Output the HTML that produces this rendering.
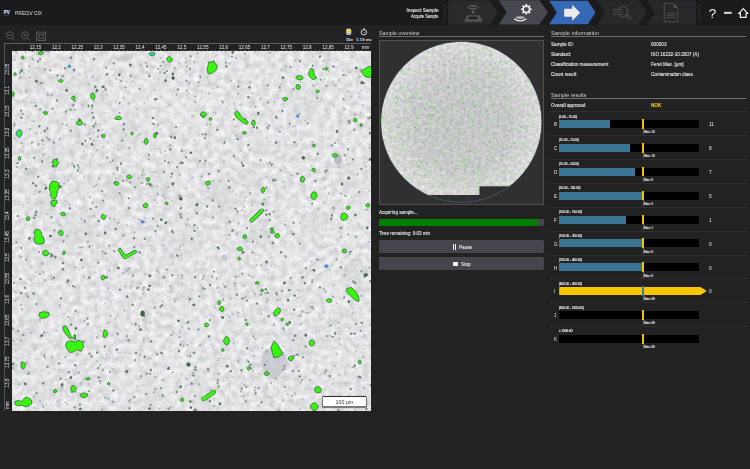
<!DOCTYPE html>
<html><head><meta charset="utf-8"><title>PRECiV CIX</title>
<style>
html,body{margin:0;padding:0}
body{width:750px;height:469px;overflow:hidden;background:#222222;position:relative;font-family:"Liberation Sans",sans-serif;color:#e8e8e8;font-size:5.5px;line-height:7px}
div,span{position:absolute;white-space:nowrap}
#hdr{left:0;top:0;width:750px;height:25px;background:#1b1b1b}
.t{font-size:5.3px;line-height:7px;transform:scaleX(.875);transform-origin:0 50%;-webkit-text-stroke:.1px currentColor;color:#ececec}
.h{font-size:6px;line-height:8px;transform:scaleX(.93);transform-origin:0 50%;color:#d2d2d2}
.ul{height:0;border-top:1px solid #8a8a8a;opacity:.75}
.sep{left:551px;width:195px;height:0;border-top:1px solid #303030}
.rng{left:559.2px;font-size:3.6px;line-height:5px;color:#f4f4f4;-webkit-text-stroke:0.12px #f4f4f4;transform:scaleX(.85);transform-origin:0 50%}
.let{left:553.8px;font-size:5.3px;line-height:7px;color:#e6e6e6;transform:scaleX(.875);transform-origin:0 50%}
.bar{left:559.2px;width:139.8px;height:8px;background:#000}
.bar i{position:absolute;left:0;top:0;height:8px;background:#3b7596;display:block}
.mk{left:642px;width:1.8px;height:9.8px;background:#f5c400}
.cnt{left:709px;font-size:5.6px;line-height:7px;color:#f0f0f0;transform:scaleX(.85);transform-origin:0 50%}
.mxl{left:642.6px;width:0;height:5.5px;border-left:0.6px solid #666}
.mx{left:644px;font-size:3.6px;line-height:5px;color:#f4f4f4;-webkit-text-stroke:0.1px #f4f4f4;transform:scaleX(.85);transform-origin:0 50%}
.btn{left:379px;width:164.5px;height:13px;background:#45464c;border-radius:1px;text-align:center;font-size:5px;line-height:13px;color:#eee}
svg text{font-family:"Liberation Sans",sans-serif}
</style></head><body>
<div id="hdr"></div>
<!-- title -->
<svg style="position:absolute;left:2px;top:8px" width="10" height="9" viewBox="0 0 10 9"><rect x="0.3" y="0.2" width="8.8" height="8" rx="0.8" fill="#141c33"/><text x="4.7" y="5.9" font-size="4.6" font-weight="bold" fill="#f2f2f2" text-anchor="middle">PV</text><path d="M1.8 7.1 Q4.7 7.9 7.6 7.1" stroke="#3b63b0" stroke-width="0.45" fill="none"/></svg>
<div class="t" style="left:15.2px;top:9.5px;font-size:5.5px;color:#c2c2c2">PRECiV CIX</div>
<!-- breadcrumb -->
<div class="t" id="bc1" style="right:311.3px;top:6.9px;font-size:5.3px;transform-origin:100% 50%;color:#ededed">Inspect Sample</div>
<div class="t" id="bc2" style="right:311.3px;top:13px;font-size:4.45px;transform-origin:100% 50%;color:#e6e6e6">Acquire Sample</div>
<svg style="position:absolute;left:440px;top:0;opacity:.999" width="310" height="25" viewBox="440 0 310 25">
<path d="M444.4 4 V21.3" stroke="#363636" stroke-width="0.8"/>
<path d="M448.3 0.3 H489.3 L498 12.4 L489.3 24.6 H448.3 Z" fill="#2a2a2b"/>
<path d="M498.7 0.3 H539.3 L548 12.4 L539.3 24.6 H498.7 L506.7 12.4 Z" fill="#46484f"/>
<path d="M549.2 0.8 H587.8 L595.6 12.4 L587.8 24.2 H549.2 L556.8 12.4 Z" fill="#3568b5"/>
<path d="M597.4 0.3 H638.6 L646.7 12.4 L638.6 24.6 H597.4 L605.3 12.4 Z" fill="#28282a"/>
<path d="M647.4 0.3 H696 V24.6 H647.4 L654.6 12.4 Z" fill="#28282a"/>
<!-- icon1 -->
<ellipse cx="473.1" cy="6" rx="3.9" ry="1" fill="#585858"/>
<path d="M467.4 7 Q473.1 11 478.9 7" stroke="#6a6a6a" stroke-width="0.9" fill="none"/>
<path d="M473.1 9.4 V12.4" stroke="#606060" stroke-width="1.2"/><path d="M470.9 11.7 H475.3 L473.1 14 Z" fill="#606060"/>
<path d="M467.5 15.2 H479.6 L482.9 21.7 H463.9 Z" fill="#555"/>
<ellipse cx="473.2" cy="17.9" rx="5.2" ry="1.7" fill="#252526"/>
<!-- icon2 -->
<g transform="translate(526.3 9.3)" fill="#f1f1f1"><circle r="3.8"/>
<g id="th"><rect x="-0.9" y="-5.3" width="1.8" height="10.6"/><rect x="-5.3" y="-0.9" width="10.6" height="1.8"/></g>
<g transform="rotate(45)"><rect x="-0.9" y="-5.3" width="1.8" height="10.6"/><rect x="-5.3" y="-0.9" width="10.6" height="1.8"/></g>
<circle r="2.4" fill="#46484f"/></g>
<ellipse cx="520.2" cy="17.6" rx="4.4" ry="1.4" fill="#b0b1b4"/>
<path d="M514 18.7 Q520.2 23.1 526.3 18.7" stroke="#f0f0f0" stroke-width="1.3" fill="none"/>
<!-- icon3 arrow -->
<path d="M564.2 8.8 H572.2 V4.8 L580.2 12.7 L572.2 20.7 V16.8 H564.2 Z" fill="#ebebeb"/>
<!-- icon4 -->
<g stroke="#5a5a5a" stroke-width="0.8" fill="none"><circle cx="622.6" cy="11.7" r="5.2"/>
<path d="M626.2 15.8 L628 14.3 L631 18 L629.1 19.5 Z"/>
<path d="M613 9.6 H616.5 M613 12 H616.5 M613 14.4 H616.5 M619.2 9.6 H622.6 M619.2 12 H622.6 M619.2 14.4 H622.6"/></g>
<!-- icon5 -->
<g stroke="#555" stroke-width="0.8" fill="none"><path d="M664.3 3.6 H673.6 L677.8 7.8 V21.7 H664.3 Z"/><path d="M666.5 13.4 H675.6 M666.5 15.4 H675.6 M666.5 17.4 H675.6"/></g>
<path d="M673.6 3.6 L677.8 7.8 H673.6 Z" fill="#555"/>
<path d="M699.6 4 V21.3" stroke="#363636" stroke-width="0.8"/>
<text x="712.5" y="17.7" font-size="13.5" fill="#f2f2f2" text-anchor="middle">?</text>
<rect x="724" y="11.8" width="7.6" height="2.1" fill="#d8d8d8"/>
<path d="M743.3 8.6 L747.6 13.3 H746.1 V17.3 H740.4 V13.3 H738.9 Z" stroke="#f2f2f2" stroke-width="1.2" fill="none" stroke-linejoin="miter"/>
</svg>
<!-- toolbar icons -->
<svg style="position:absolute;left:0;top:25px" width="380" height="20" viewBox="0 25 380 20">
<g stroke="#5c5c5c" stroke-width="0.9" fill="none">
<circle cx="10" cy="35.3" r="3.5"/><path d="M12.6 38 L14.8 40.4 M8.3 35.3 H11.7"/>
<circle cx="25" cy="35.3" r="3.5"/><path d="M27.6 38 L29.8 40.4 M23.3 35.3 H26.7 M25 33.6 V37"/>
<rect x="36.6" y="32.1" width="9" height="8.4"/><rect x="39.2" y="34.5" width="3.9" height="3.7"/>
<path d="M36.6 32.1 L39.2 34.5 M45.6 32.1 L43.1 34.5 M36.6 40.5 L39.2 38.2 M45.6 40.5 L43.1 38.2"/>
</g>
<rect x="346.2" y="28.6" width="5" height="6.5" rx="1.8" fill="#d2d3d6"/><rect x="346.2" y="30.4" width="5" height="1.8" fill="#f2cf12"/><rect x="347" y="33.2" width="3.4" height="0.5" fill="#555b70"/>
<circle cx="363.9" cy="32.3" r="2.7" stroke="#d8d8d8" stroke-width="1" fill="none"/><rect x="363.2" y="28.3" width="1.4" height="1.3" fill="#d8d8d8"/><path d="M363.9 32.3 H365.3" stroke="#d8d8d8" stroke-width="0.8"/>
<text x="349.3" y="40.8" font-size="4.3" font-weight="bold" fill="#e0e0e0" text-anchor="middle">10x</text>
<text x="363.8" y="40.8" font-size="4.3" font-weight="bold" fill="#e0e0e0" text-anchor="middle">1.19 ms</text>
</svg>
<!-- ruler frame -->
<div style="left:4px;top:43px;width:367px;height:368px;background:#222;box-sizing:border-box;border-left:1px solid #4f565c;border-top:1px solid #5a6168"></div>
<svg class="mic" style="position:absolute;left:12px;top:51px" width="359" height="360" viewBox="12 51 359 360"><defs><filter id="bl" x="-20%" y="-20%" width="140%" height="140%"><feGaussianBlur stdDeviation="0.6"/></filter><filter id="bl2" x="-50%" y="-50%" width="200%" height="200%"><feGaussianBlur stdDeviation="3"/></filter><filter id="nz" x="0" y="0" width="100%" height="100%" color-interpolation-filters="sRGB"><feTurbulence type="fractalNoise" baseFrequency="0.16" numOctaves="3" seed="5"/><feColorMatrix type="matrix" values="0.24 0 0 0 0.768  0.24 0 0 0 0.768  0.23 0 0 0 0.782  0 0 0 0 1"/></filter><filter id="bl3" x="-20%" y="-20%" width="140%" height="140%"><feGaussianBlur stdDeviation="0.5"/></filter></defs><rect x="12" y="51" width="359" height="360" fill="#dddddd"/><rect x="12" y="51" width="359" height="360" fill="#dddddd" filter="url(#nz)"/><g filter="url(#bl2)" opacity="0.35"><circle cx="128.3" cy="105.3" r="10.9" fill="#c9cccb"/><circle cx="306.8" cy="84.9" r="10.2" fill="#eceeed"/><circle cx="89.1" cy="81.9" r="8.8" fill="#cfd2d0"/><circle cx="44.6" cy="203.8" r="12.4" fill="#c9cccb"/><circle cx="352.1" cy="278" r="10.2" fill="#c9cccb"/><circle cx="219.2" cy="193.8" r="13.8" fill="#c9cccb"/><circle cx="211.8" cy="98.9" r="8.8" fill="#eceeed"/><circle cx="54.3" cy="162.1" r="12.3" fill="#cfd2d0"/><circle cx="49" cy="256.6" r="6.7" fill="#c9cccb"/><circle cx="208.6" cy="73.6" r="5.5" fill="#cfd2d0"/><circle cx="190.2" cy="242.4" r="12" fill="#d2d4d6"/><circle cx="222.2" cy="214.1" r="7.7" fill="#cfd2d0"/><circle cx="262.9" cy="138.9" r="10.2" fill="#eceeed"/><circle cx="189.7" cy="174.7" r="9" fill="#eceeed"/><circle cx="363.9" cy="93.5" r="8.8" fill="#e9ebe9"/><circle cx="66.6" cy="227" r="5.4" fill="#c9cccb"/><circle cx="286.5" cy="257.3" r="12.9" fill="#e9ebe9"/><circle cx="134.1" cy="177.1" r="9.5" fill="#d2d4d6"/><circle cx="36.7" cy="84.7" r="7.4" fill="#c9cccb"/><circle cx="33.8" cy="303.5" r="10.8" fill="#d2d4d6"/><circle cx="114.2" cy="189.9" r="11" fill="#c9cccb"/><circle cx="349.7" cy="179" r="10.5" fill="#d2d4d6"/><circle cx="33.2" cy="327.6" r="6.2" fill="#cfd2d0"/><circle cx="154.8" cy="381.1" r="9.5" fill="#cfd2d0"/><circle cx="173.3" cy="248.8" r="13" fill="#d2d4d6"/><circle cx="322.2" cy="151.2" r="8.7" fill="#e9ebe9"/><circle cx="257.1" cy="188" r="7.1" fill="#c9cccb"/><circle cx="75.3" cy="134.5" r="7.1" fill="#d2d4d6"/><circle cx="310.4" cy="116.6" r="7.5" fill="#cfd2d0"/><circle cx="162.4" cy="183.9" r="10.1" fill="#cfd2d0"/><circle cx="259.9" cy="236.6" r="10.6" fill="#c9cccb"/><circle cx="175.9" cy="364.6" r="13.6" fill="#eceeed"/><circle cx="152.9" cy="194.6" r="5.9" fill="#d2d4d6"/><circle cx="34.3" cy="75.2" r="6.9" fill="#cfd2d0"/><circle cx="51.5" cy="267.3" r="5.9" fill="#eceeed"/><circle cx="66.3" cy="87.5" r="8.3" fill="#c9cccb"/><circle cx="37.2" cy="125.9" r="8.4" fill="#e9ebe9"/><circle cx="355" cy="267.8" r="9.3" fill="#c9cccb"/><circle cx="316.8" cy="408.5" r="9.2" fill="#d2d4d6"/><circle cx="124" cy="102.9" r="11.7" fill="#e9ebe9"/><circle cx="183.8" cy="300.1" r="9.6" fill="#cfd2d0"/><circle cx="353.4" cy="241.2" r="6.3" fill="#eceeed"/><circle cx="340.2" cy="323.9" r="7.7" fill="#c9cccb"/><circle cx="261.9" cy="145" r="8.3" fill="#cfd2d0"/><circle cx="139.7" cy="131.2" r="9.9" fill="#eceeed"/><circle cx="130.3" cy="131.3" r="12.3" fill="#cfd2d0"/><circle cx="301.4" cy="345.6" r="11.7" fill="#cfd2d0"/><circle cx="83.8" cy="228.4" r="11.6" fill="#c9cccb"/><circle cx="295.7" cy="221" r="6.7" fill="#eceeed"/><circle cx="355.4" cy="212" r="13.4" fill="#e9ebe9"/><circle cx="354.8" cy="182.3" r="7" fill="#cfd2d0"/><circle cx="180.8" cy="172.6" r="9.3" fill="#eceeed"/><circle cx="313.7" cy="223.6" r="10.9" fill="#c9cccb"/><circle cx="311.6" cy="94.2" r="8.5" fill="#cfd2d0"/><circle cx="183.6" cy="115.3" r="12.1" fill="#e9ebe9"/><circle cx="43.1" cy="391.6" r="11.5" fill="#d2d4d6"/><circle cx="156.1" cy="391.8" r="11.5" fill="#cfd2d0"/><circle cx="368.5" cy="60.9" r="10.3" fill="#d2d4d6"/><circle cx="301.5" cy="103.6" r="12.4" fill="#d2d4d6"/><circle cx="248" cy="177.1" r="9.9" fill="#cfd2d0"/><circle cx="19.7" cy="338.8" r="11.5" fill="#c9cccb"/><circle cx="201" cy="387.1" r="8.9" fill="#cfd2d0"/><circle cx="308.6" cy="127" r="7.3" fill="#e9ebe9"/><circle cx="191.9" cy="325.9" r="7.9" fill="#eceeed"/><circle cx="162.4" cy="98.2" r="13.2" fill="#e9ebe9"/><circle cx="334.3" cy="289.5" r="12.3" fill="#eceeed"/><circle cx="163" cy="381.4" r="9.5" fill="#eceeed"/><circle cx="66.5" cy="234.8" r="12.9" fill="#cfd2d0"/><circle cx="230.5" cy="330.4" r="6.3" fill="#cfd2d0"/><circle cx="182" cy="312.1" r="10" fill="#e9ebe9"/></g><g filter="url(#bl)"><path d="M263 352 L272 347 L284 352 L288 362 L283 372 L274 380 L266 374 L261 364 Z" fill="#bfc1ca" opacity="0.7"/><ellipse cx="338" cy="159" rx="4" ry="5" fill="#a4a6b0" opacity="0.7"/><ellipse cx="28" cy="172" rx="5" ry="4" fill="#c0c2c5" opacity="0.6"/><ellipse cx="127" cy="57" rx="6" ry="4" fill="#c0c2c5" opacity="0.6"/></g><g filter="url(#bl)"><path d="M257 242.1l-0 0.4M329.1 71.5l-0.5 -0.7M47.1 213.8l-0.8 0.6M34.7 168.2l0.8 0.2M83.6 150.8l0 0.5M194.3 140.2l0 0.6M345.1 383.2l0.6 -0.5M172.7 201l-0.2 -0.3M252.9 205.2l-0.5 -0.3M55.9 330.7l0.7 0.2M143.5 142.1l-0.6 -0.1M280.1 84.9l0.6 -0.5M251.8 131.5l0.3 0.8M157 202.7l-0.2 -0.7M143.4 172.7l-0.1 0.3M150 237.3l-0.3 0.7M52.5 381.7l-0.4 0.6M42.2 148.9l0.6 -0.5M283.3 346.1l0.6 0.3M351.6 197.1l0.1 0M189.6 168.7l-0.4 0.5M77.8 373.3l-0.4 -0.8M43.8 144.8l0.2 -0.4M106.9 94.8l-0.8 0.8M162 380.6l0.2 -0.7M266.7 388.7l0.8 -0.4M77 386.6l0.2 0M85.9 211.4l0.3 -0.4M300.5 409l-0.7 -0.8M193.5 403.1l0 -0.4M172.5 288l0.2 0.3M208 370.9l0.8 -0.3M89.3 133.6l-0.5 0.6M273.7 101.3l0.8 0.8M312.5 56.1l0.2 0.6M166.6 70.9l0.3 -0.2M193.6 400.5l0.2 0.3M28.2 117.7l-0.4 -0.8M142.7 169.4l0.8 -0.3M24.4 368.7l-0.5 -0.5M132.4 81.2l-0.4 0.2M101.1 330.4l-0.7 0.5M63.6 262.2l-0.2 -0.3M238.1 81.4l0.7 0.6M67.7 372.4l0.5 0.2M286.4 310.4l-0 -0.3M234.1 103.1l0.5 0.3M196.2 205.5l0.3 0M338.6 322l0.1 0.5M17.8 298.1l0.5 0.3M355.2 282.4l-0.7 -0.7M240.7 396.4l-0.2 -0.1M30.2 57.8l0.1 -0.4M106.7 215.5l-0.7 0.7M334.3 84.1l0 0.4M182.1 342.3l0.6 -0.4M283.6 134.1l0.2 -0.1M315.5 78.6l0.7 -0.3M28.8 278.8l-0.5 0.2M131.1 285.6l0.3 0.2M59.9 224.7l-0 0.8M47.7 129.4l-0 0.3M114.5 218.7l0.4 0.8M209.1 163.2l-0.7 -0M116 78.5l0 0.8M368.8 190.3l0.7 0.7M38.8 83.5l0.4 -0.4M141.1 268.2l0.2 -0.4M52.5 182.5l-0 0.6M153.5 108.3l0.7 0.3M157.5 312.8l-0.1 -0.2M55.4 170.3l-0.3 -0.3M155 389.4l-0.5 -0.8M277.6 142.2l-0.7 -0.2M324.3 78.5l0.7 0.4M318.7 152l-0.7 0.3M240 104.6l0.8 -0.1M125.3 329.3l0.5 -0.1M22.4 325.2l-0.2 0.6M210.9 124.2l-0.7 0.7M159.5 272.4l-0.6 0.6M186.3 379.3l0.1 -0.5M160.9 152.4l-0.4 0.4M246.4 197.2l-0.4 -0M252.1 94.1l0.2 -0.7M191.7 343.3l0.1 -0.1M131.5 324.3l-0.1 0.1M99.6 113.9l0.1 -0.3M144.2 342.4l-0.5 -0.8M324.6 188.8l0.4 -0.5M109 321.8l-0 0.1M141.3 298.2l0 0.5M316.7 84.3l0.6 -0.2M243.8 206.5l-0.3 0.5M359.5 96.8l-0.1 0.4M300.7 399.6l-0 -0.7M346 385.1l0 -0.1M173.2 332.9l-0.4 -0.6M360.9 90.2l0.5 0.3M315.9 373.2l-0.7 0.4M12.5 96.2l0.1 -0.7M268.7 397.5l0.2 0M169 326l-0.6 -0.3M350.7 120l-0.4 0.5M12.4 244.5l0.8 -0.4M125.6 353.2l-0.4 0M208.4 61.5l-0.1 0.2M31.9 120.9l0.6 0.2M41.1 133l-0.1 -0.2M189 301.5l0.3 -0.2M154.3 53.4l-0.3 0.6M36.2 229.5l-0.5 0.4M81.6 218.4l-0.4 0.6M51.1 275.5l0.2 0.6M186.1 378.7l-0.7 0.2M343 70.6l-0.8 0.2M161.1 306.5l-0.5 -0.1M267.6 164.1l-0.6 -0.7M71.5 119.6l0.2 0M179.9 163.3l0.4 0.5M365.6 210.3l-0.6 -0.7M41 202.3l0.6 0.1M284.4 187.8l0.4 -0.3M300.6 82.6l0.3 -0.5M206.4 211.7l-0.3 0.4M182.4 278.4l-0.4 0.2M157.3 186.2l-0.1 0.5M34.3 121.2l-0.7 0.2M142.3 171.6l0.7 -0.7M280 299.2l0.7 -0.3M271 265.4l0.5 0.7M35.5 348.4l-0.6 0.3M179.2 330.5l0.5 0.7M304.5 98.8l-0 -0.8M346.2 160.2l0.3 -0.6M96.8 361l-0.1 0.5M225.9 235.3l-0.2 -0.5M158.4 284.8l-0 0.1M69.7 204.6l-0.6 -0.7M236.2 126l-0.1 0.8M361 113.3l-0.6 -0.1M332 135.6l0.1 0.4M284.7 331.7l-0.3 -0.4M108.1 142.5l-0.4 -0.1M78.7 135.8l-0.3 0.7M79.6 74.3l-0.4 -0.4M200.9 284.9l-0.6 -0.1M25.3 52.6l0.6 -0.4M172.9 185.6l0.6 -0.4M30.1 267.2l0.5 -0.5M39 235.6l-0.5 0.2M290.2 290.3l-0.8 0.2M266.8 176.9l-0.7 -0.3M27.9 411l-0.7 0.4M340.1 344.3l0.5 -0.1M145.5 274.6l-0.7 -0.7M189.9 225.1l-0.1 0.5M250.4 106.6l0.1 0.2M154.8 148.6l0.8 0.3M162 69.5l0.4 0.6M160.7 57.6l0.4 0.5M243.4 191.7l-0.2 0.7M167.9 107.4l-0.6 -0.7M219.4 182.3l0.4 -0.6M30.6 102.3l0.5 -0.2M217.7 384.8l0.4 -0.5M136.9 109.3l-0.5 -0.7M149.8 322.3l0.5 0.5M120.3 352.4l-0.7 0.7M124.9 269.8l0.2 -0.7M267.7 298.8l0.6 0.2M319.5 274.6l0.2 -0.5M181.8 254.6l-0.7 0.7M68.2 180.3l-0.6 0.8M304.8 120.3l0.6 0.5M253.3 291.4l-0.3 -0.2M175.6 356.6l0.4 0.2M122.6 140.7l-0.2 -0.2M192.8 115.4l-0.8 0.8M179 211.9l0.2 0.5M312.3 342.8l-0.2 -0.7M140.7 182.5l0.5 0M247.9 65.6l-0.6 0.7M124.6 310.3l-0.7 0.4M333.3 286l0.5 -0.8M35.8 272.1l0.3 -0.6M59.3 369.9l-0.3 0.5M297.4 298l0.4 -0.4M311.1 270.8l-0.4 -0.3M232.3 376.8l-0.1 -0.4M358.2 223.8l0.1 0.2M97.2 185l-0.5 -0.2M240.5 151.2l-0.3 -0.2M296.4 146.2l0.4 -0.7M320.1 398.8l-0.1 0M259.3 373.6l-0.4 0.1M319.5 316.7l-0.2 -0.2M144.5 103.6l-0.3 -0.7M94.6 272.5l0.7 -0.3M197.3 162.6l0.7 0.6M345.3 373.5l0.4 0.4M91.6 155.7l0.2 -0.1M142.7 68.2l-0 0.2M28.4 70.6l0.1 -0.3M199.8 243.3l-0.1 -0.3M60 182.8l0.5 -0.5M17.1 339.5l0.3 -0.1M34.9 103.1l0.3 -0.4M303.4 399.2l-0.7 0.5M332.5 265.1l0.1 0.2M197.8 228.4l-0.5 -0.8M34.1 60.1l-0.5 -0.5M339.3 88.8l0.2 0.3M82.8 199.7l0 0.2M244.5 200.5l0.2 0M34.9 276.3l0.8 0.4M183.6 244.8l-0.2 -0.1M339.5 80l0.2 -0.5M369.8 145.1l0.2 -0.6M332 384.1l0.7 -0.4M30.9 279.9l0.3 0.3M341.3 400.9l-0.3 0.7M333 81.8l0 -0.5M336.8 354l-0.5 -0.5M340.5 120.1l-0.2 0.2M148.2 357.7l0.7 0.8M314.1 244.1l-0 0M14.3 60.5l0.7 -0.4M329.6 335.1l-0.2 0.1M214.9 112.8l-0.7 -0.6M235.3 109.3l0.8 0.3M23.1 100.8l0.2 -0.7M36.4 67.8l0.6 0.4M83.6 394.6l0.1 0.3M327.8 323.1l0.3 -0.2M100.5 124.1l-0.7 0.7M339.1 322.4l-0.7 0.4M239 222.8l-0.6 0.5M244 157l-0.3 -0.4M138 385.8l-0.7 0.4M338.8 327.9l0.2 -0M115.3 319.4l0.5 -0.8M198.2 86.4l-0 -0.7M215.2 308.2l0.5 0.1M115.1 208l0 -0.3M281.4 70.4l-0.2 -0.6M261.6 348.1l0.7 0.1M355.6 236.5l0.1 -0.5M304.7 388.8l-0.4 -0.5M349 327.1l-0 0.8M213.5 88.6l-0.3 -0.6M345.3 372.1l0.4 -0.1M243.9 184.9l-0.3 -0.1M207.6 112.6l0.8 0.2M350.9 96.7l0.2 0.3M229.3 63.2l0.1 0M323.6 213.1l0.1 -0.3M178.3 299.1l-0.4 -0.4M131.9 282.4l0.3 0M108 322.7l0.5 0.2M271.7 401.9l0.4 0.2M137.2 136l0.7 -0.4M354.8 409.2l-0.5 0.3M82.2 105.3l-0.6 -0.3M118.8 149.6l-0.6 0.7M112.8 369.7l-0.1 -0.8M318.7 208.2l-0.4 0.8M118.3 59l-0.4 0.4M14 138.2l0.6 0.3M222.9 284l0.6 0.3M246.2 366.9l0.2 0.1M94.1 116.3l-0.6 -0.1M105.3 303.2l0.6 -0.4M155.6 307.5l-0.5 0.6M185.3 58.1l0.6 0M249.3 365.3l0.6 -0.3M15.8 350.5l0.7 -0.6M102.2 129.4l0.3 0.7M83.7 176.4l0.6 -0.1M85.6 222.3l-0.8 0.5M144.8 174.4l0.4 -0.1M367.5 117.2l0 0.7M273.7 272l0.2 -0.4M149.1 73.1l-0.7 0.7M237.7 294l0.1 -0.6M121 195.2l0.7 0.8M368.9 396.9l-0.1 -0.5M345.7 75.8l0.5 -0.5M242.5 310.5l0.5 -0.6M251.1 350.1l0.5 -0.1M369.6 324.6l0.2 0.4M180.5 333.1l-0.4 0.3M258.8 404.8l0.3 -0M301.2 338.6l-0.2 0.2M127 225.6l0.2 -0.7M334 106l-0.3 -0.2M42.6 254.3l-0.3 0.7M202.5 175.3l0.1 0.3M87.3 76.9l-0.3 0.2M219.7 358.5l-0.5 -0.1M293.8 126.1l-0.2 0.1M230.8 298.7l0.8 -0.7M335.7 248.5l0.2 -0.3M189.5 127.7l-0.7 0.5M253 93.1l-0.6 -0.1M308.9 221.4l0.1 -0M337.1 303.2l-0.4 -0.5M227.3 315.5l-0.5 -0.3M261.8 230.1l-0.3 -0.1M164.9 411l0.3 -0.5M141.4 283.7l-0.8 -0.7M276.4 410.6l0.5 -0.6M185.8 323.6l-0.6 -0.5M161.2 96.7l-0.6 0.3M134.5 331.3l0.1 0.7M114 174.1l-0.4 -0.7M115.8 178.9l-0 -0.3M365.4 365.3l-0.2 -0.5M188.7 93.5l-0.5 0.3M57.8 401.2l-0.7 0.8M155.2 250.5l-0.2 0.1M155.1 90.1l-0.7 0.5M182.5 326.8l-0.7 0M207.2 186.4l-0.6 0.3M259.4 366.5l-0.7 -0.7M239.5 276.1l-0.5 0.3M324 202.8l-0.6 0.7M16.8 364.9l-0.6 -0.3M266.9 361.5l-0.5 -0.7M19.3 254.9l0.1 0.7M190.7 239l0.5 0.4M163.2 301.5l-0.2 -0.7M256.1 264.8l0.8 0.3M67.8 328.2l0.1 -0.7M181.5 373.5l0.2 -0.1M15.3 292l0.8 0.6M90.4 94.7l-0 -0.4M216.3 213.3l0.4 0.7M143.3 320l0.3 -0.6M284.6 156.5l0.1 -0M252.4 371.4l0.7 -0.7M23.5 72.8l0.6 0.3M233.9 191l-0.3 0.2M355.8 351.6l0.2 -0.3M352.6 313l-0 -0.5M358.9 93l0.7 -0.5M299.9 222.7l0.4 -0.1M109.6 322.7l-0.3 -0.4M235.2 285.3l0.5 0.2M324.2 312.3l-0.8 -0.6M310.9 261.5l0.8 -0.4M151.1 186.4l0.4 -0.4M174 298.9l-0.3 -0.4M68.5 382.4l0.4 0.5M115.6 101.6l0.6 0.8M64.8 402.1l0.5 0.1M291 231l0.1 0.1M186 188.4l0.5 0.4M364.6 162.4l-0.7 -0.2M266.3 384.4l0.1 -0.8M150.2 245.6l0.1 -0.2M34.5 194.3l0 -0.4M311.2 166.6l0 -0.5M88.4 84.2l0.5 -0.3M219.5 180.2l0.4 0.6M100.4 383.1l-0 0.6M145.4 217.8l-0.7 -0.3M22.9 152l0.2 -0.6M85.5 364.5l0.1 0.1M88.7 384.2l-0.4 -0.6M172.4 264.5l0.2 -0.6M314.9 173l0.8 -0.2M21.9 63.5l-0.2 0.3M186.8 355.4l0.6 0.6M241.7 383l0.3 -0.7M126.4 135l-0.7 0.7M193.8 116.8l0.6 -0.2M96.4 310.5l-0.5 0.7M349.9 72.3l0.1 -0.8M342 143.8l0 0.4" stroke="#a9b8aa" stroke-width="1.8" stroke-linecap="round" fill="none" opacity="0.7"/><path d="M285.4 225l-0.6 -0.3M14.1 122.6l0.4 0.1M170.4 285.9l-0 -0.2M152 186l-0.2 -0.1M301.9 380.1l0.6 -0.1M339.6 338.6l-0.5 0.5M39.9 273.7l-0.2 0.4M291.4 395.9l0.7 -0.2M19.8 78.1l0.8 -0.3M96 92.6l-0.2 -0.3M276.2 115.9l-0.1 0.6M169.6 104.8l-0.1 -0.4M21.1 256.6l-0.3 0.5M105.6 90.3l-0.1 -0M67.1 235.8l0.2 0.5M344.2 252.6l0.5 -0.6M283 400.5l-0.1 -0.4M97.7 136.7l-0.2 -0.1M70.2 350.6l0.8 -0.6M241.7 210.2l0 0M171 335.2l0.7 -0.3M141.3 65.6l-0.1 -0.4M76.9 354.6l0 -0.4M75.1 267.2l0.5 0.6M274.4 325.1l-0.5 -0.6M252.5 277.2l-0.5 -0.3M15.6 300.2l0 0.5M340.9 237.6l-0.2 -0.3M241.5 391.4l-0.7 -0.1M285.9 99l0.3 -0.4M214.2 405.9l-0.7 0.3M218.4 359.9l-0.2 0.7M359.8 76.7l-0.2 -0.4M310 379.5l0.4 0.6M218.9 374.3l-0.3 -0.6M274.4 211.7l-0.8 0.5M60.2 138.7l-0.7 0.2M72.3 163.3l0.1 0.7M19 384.5l0.4 -0.4M312.6 280.3l-0.1 -0.4M171.5 177.3l-0.6 -0.5M110 218.3l0.1 0.4M51.5 94.8l0.6 0.1M93.6 132.7l0.3 -0.1M154.4 392.3l-0.8 0.2M261.1 265.9l0.2 -0.7M360.4 69.7l-0.2 -0.2M313 308.6l0.5 0.1M365.9 166.4l-0.2 0.1M128.6 103.8l0.3 -0.2M324.5 289.7l-0.8 -0.6M79.3 167.8l-0.5 0.3M92.9 202.5l-0.2 0.8M174.9 67.8l0.8 0.8M26.5 362.6l0.2 0.7M235.8 277.2l0.5 -0.7M48.1 94.8l-0.8 -0.4M26.2 91.7l-0.2 -0.5M33.7 396.3l0.7 0.6M42.3 263.5l0.7 -0.1M195.7 369.7l0.7 0.1M110.4 315.9l0.4 -0.3M175 301.1l-0.4 -0.2M208.9 183.1l0.6 -0.3M183.6 345.8l-0.8 -0.3M79.8 247.5l0.8 -0.2M343.8 109.4l0.7 -0.3M128.8 148.2l0.6 -0.5M32.4 58.8l0.1 0.2M136.9 287.8l0 0.5M139.1 325.6l0 0.8M255.3 387.2l-0.1 0.3M62.4 123.9l0.2 -0.4M313.2 85.2l0.6 0.7M369.4 147.7l0.2 0.2M264.6 199.7l-0.6 -0.1M209.4 93.3l-0.2 0.8M65.7 357l-0.4 0.2M51.9 357.6l0.3 -0.3M138.6 178.1l0 0.2M244.7 53.4l0.4 0.8M148.7 159l0.1 0.5M168.4 186.7l-0.4 0.5M130.5 399.8l0.2 -0.4M129 401l0.6 0.7M21.2 143.4l0.6 -0.3M204.6 163.5l0.2 -0.1M308.4 312.8l-0.1 -0.1M26.6 294.4l-0.1 -0.8M36.5 133.5l-0.1 0M244.8 385.2l-0.6 -0.5M163.2 195.6l0.4 0.6M222.9 300l0.4 -0.7M142.2 183l-0.7 -0.3M75 287.1l-0.3 -0.3M347.8 234.2l0.8 0.2M200.1 344.8l-0.5 0.6M160 72.7l0.1 -0.6M216.6 278.3l0.4 0.3M15.9 52l0.3 0.1M341.2 194.1l-0.6 -0.8M22.6 114.1l0.4 0.1M324.7 373.4l0 -0.6M83.3 267.6l-0.6 0M194.9 61.5l-0.7 0.7M188.1 219.3l-0.1 0.5M245.4 297.4l0.1 -0.6M97.5 150.2l-0.7 0.2M320.5 392.2l-0.7 -0.5M236 58l-0.4 -0.2M286.3 66.8l-0.7 -0.4M92 108.4l0.1 -0.5M14.2 363.1l-0.1 -0.1M102.5 370.3l0.8 -0.7M255.1 294l0.1 -0.1M155.1 307.2l-0.8 0.6M43.4 112.2l-0.2 -0.8M328.7 193.6l-0.2 -0.3M324.9 171.9l0.2 0.7M163.6 379.7l0.1 -0.2M179.7 175l-0.1 -0.4M21.1 340.8l-0.4 -0.6M82.5 247.2l0.5 0.1M179.7 337.2l-0.4 -0.2M89.7 196.9l0.2 0.1M118.7 222.3l-0.5 0.6M254.4 390.2l0.8 0.2M170.1 407.4l0.1 -0.2M195.2 96.2l0.4 0.3M44.8 357.7l0.4 0.4M22.3 309.6l-0.6 -0.8M267.1 301.1l0.4 -0.4M79.6 371.9l-0.7 0.7M301.1 324l-0.5 0.3M43.6 154.9l0.5 -0.2M139.8 355l-0.1 0.2M237.7 361.7l0.7 -0.5M143.6 338.8l0.3 0.6M21.1 304.4l-0.1 0.8M155.8 377.2l-0.6 -0.3M109.2 270.2l-0.4 0.3M157.3 270.1l-0.1 0.4M68.1 316.8l0.1 0.2M350 254.2l-0.4 -0M199 384.2l0.3 0.1M347.9 91.3l0.4 0.2M335.5 366l0.1 0.3M361.7 296.2l-0.7 -0.3M291 175.4l0.7 -0.1M279.1 410.3l0.2 -0.4M201.3 176.7l0.7 -0.1M134.2 232.1l0.3 0.5M236.7 234.1l0.3 -0.5M253.7 355.8l0.4 -0M80 393.8l0.5 0.1M74.7 109.9l0.4 -0.4M105.4 397.9l-0.5 -0.2M45.2 280.1l-0.6 0.3M186.6 224.8l0.3 -0.8M260.3 98.9l0.2 0.3M59.9 305.8l0.1 -0.4M238 93.5l-0.1 0.7M255.1 106.7l0.8 0.5M157.8 125.3l0.3 -0.8M186.7 66.6l0.6 -0.3M51.7 162.2l0.7 -0.5M171.8 255.9l-0.3 0.1M28.4 219.7l0.8 -0M280.3 170.4l0.4 -0.4M243.6 395.4l-0 0.5M127.5 180.3l-0.7 -0.3M232.2 314l0.3 0.2M40.1 320.1l-0.8 -0.2M64.1 183.4l0.7 0M333.5 296.5l-0.6 0.4M123.4 273l-0.2 0.2M139.9 133.9l-0.6 0.7M312.8 142.3l-0.7 -0.6M300.2 382.6l0.8 -0.2M30.1 128.9l-0.1 0.4M369.4 267.9l0.2 -0.6M93.7 100.8l0.2 -0.2M363.5 357.2l-0 -0.5M145.7 62.5l0.2 0.5M195.6 102.5l-0.7 -0.7M267.2 371.6l-0.7 -0.8M355.2 114.5l0.4 -0.2M13.5 340.5l0.3 0.1M180.3 246.4l0 -0.1M204 276.3l-0.6 -0.2M230.7 80.3l0.5 0.4M131 288l0.1 -0.1M144.3 287.3l-0.6 0.6M202.4 279.1l0.6 -0.4M277.6 299.9l-0.6 0.1M211.2 390.5l-0.2 -0.4M170.5 145l-0.4 0.7M84.8 320.9l-0.4 0.5M245.2 118.5l0.3 0.3M93.5 215.9l0.1 0.3M276.1 378.3l0.1 0.6M255.9 339.1l-0.6 0M194.1 352.9l0.7 0.2M356.8 236.5l-0.1 0.3M207.4 399.5l-0.5 -0M45.4 185.4l0.2 -0.2M29 66l0.3 0.7M177 94.4l-0.6 0.7M43.5 406.9l-0.5 -0.6M273.4 178.7l-0.2 0.5M300.7 316l-0.8 -0.4M97.9 235.7l0 -0.2M187.5 345l-0.2 -0.2M129.5 268.1l-0.7 0.7M99 178.6l0.3 -0.8M367 209.4l0.5 -0M38.5 144l-0.6 0.7M325.7 292l0.5 0.1M101.8 410l0.4 -0.4M171.4 59.9l0.8 -0M185.7 62.4l0.5 -0.7M234.7 283.1l0.2 0.5M359.3 300.5l-0.1 -0.4M355.9 237.1l-0.2 0M123.7 98.1l0.2 -0.5M306.1 312.8l-0.3 -0.1M348.5 164.2l-0.3 -0M93.4 140.5l0.6 0.2M238.5 312.7l-0.6 -0.2M34.8 407.9l-0.2 0.1M221.8 101.1l0.3 0.7M336 85.3l-0.5 -0.1M217.3 86.6l0.5 0.5M97.5 337.8l-0.6 -0.7M357.7 173.9l-0.2 0.6M100 365.2l0.3 -0.3M264.8 292.8l0.6 0.5M192.8 372.9l0.5 0.8M66.1 124.9l0.6 0.3M157.4 193.6l0.4 0.7M222.7 102.8l0.4 -0.4M217.3 288.2l0.7 -0.7M80.3 383.9l0.1 -0.3M138.9 219.4l0.8 0.3M270.9 382.9l0.5 -0.3M74.9 374.2l0.1 0.4M236.9 136.3l-0.8 -0.7M172.8 372.4l-0.3 0M47.7 138l-0.7 -0.6M29.4 77.4l0.5 0.1M270.1 52.8l-0.4 0.2M17.4 167.2l-0.8 -0.3M323.5 60.8l-0 0.2M299.3 113.8l0.6 0.5M43.3 271.6l0.4 0.8M155.4 389.5l0.6 -0.8M125.8 286.5l-0.3 -0.1M266.9 351.6l-0.5 -0.8M87.6 241.6l0.5 -0.2M141.9 174.9l0.3 0.6" stroke="#8fa391" stroke-width="2.0" stroke-linecap="round" fill="none" opacity="0.75"/><path d="M67.1 404.3l0.1 -0.4M234.1 343.8l-0 -0.7M244.4 285.6l0.1 0.3M212.8 181.1l0 -0.4M102.8 251.9l-0.6 0.5M362.7 105.2l0.2 -0.2M363.5 388.3l0.2 -0.6M207 124.8l0.4 -0.4M229.6 316.5l0.6 0.6M319.2 331.5l0 -0.2M266.8 210l0.6 -0.5M339.5 375.4l-0.2 -0.5M295.5 60.5l0.3 -0.8M301.6 379.9l0.3 -0.2M93.9 186.4l0.7 -0.2M247.9 360.7l-0.8 -0.8M266.6 138.1l-0.2 -0.3M164.8 151.3l0.6 -0M364.3 335.7l-0 0.7M288.1 394.5l-0.6 -0.3M43.7 52.4l0.6 -0.4M126.8 270.7l0.7 -0.5M30.7 332.6l0.6 0.4M28.6 329.6l-0.1 -0.1M62.2 388l0.3 0.5M66.5 379.6l-0.6 -0.3M192.4 177.6l0.4 -0.1M154.6 200.1l0.2 0.3M154.4 171.8l0.6 0.1M84.3 276.8l-0.8 -0.6M225.7 257.9l0.3 0.4M29.3 372.8l-0.7 -0.6M355.6 400.4l0 -0.8M92.4 245.6l0.2 0.1M368.6 241.8l0.5 0.7M39.8 400.4l0.6 0.8M92.4 77.1l0.3 -0.8M108.6 398.9l-0.5 -0.7M295.4 393.7l-0.4 -0.3M26.9 214.3l-0.3 -0.3M159.3 408.6l0.4 -0.4M163.5 245.4l-0.2 -0.6M285.2 368.4l0.5 0.6M240 137.1l0 0.8M261 313.8l0.8 0.5M250.2 82.3l0.2 -0.7M269.2 197.1l0.1 0.3M170.8 291.5l-0.1 0.1M182 284l-0 -0.3M208.1 187.8l0.5 0.5M324.1 178.9l-0.7 0.8M107.6 288.5l0.5 -0.7M298.2 290.1l0.7 0.4M106.2 353.8l0.6 -0.2M223.6 256.5l0.8 -0.7M283.9 182.1l-0.5 -0.5M143.3 293.5l-0.6 0.3M75.8 392l0.6 0.2M338.9 166.9l-0.2 0.6M165.7 198.6l0.3 -0.2M143 289.7l0 -0.3M249.7 150l-0.3 -0.1M52.1 279.5l0.4 -0.5M197.7 53.1l-0.6 -0M249 275.2l0 0.5M102.8 251.2l-0.8 -0.4M224 161.4l0.1 0.7M103.8 146.5l-0.1 0M189.1 83l-0.6 0.7M116.3 332.2l0.7 0.3" stroke="#9aa6c8" stroke-width="1.8" stroke-linecap="round" fill="none" opacity="0.8"/><path d="M146.9 66l0.4 0.8M166.7 269.7l-0.4 -0.4M317 97.6l0.2 0.8M317.8 259.9l-0.7 -0.5M320.8 79.8l-0.1 -0.2M160.9 387.9l0.2 0.5M50.7 253.9l0.7 0.3M168.6 409.2l-0.5 -0.7M154.7 99.7l0.4 -0.8M95.4 123.1l0.1 0.7M117.5 169.9l-0.2 -0.1M44.3 356.2l0.1 -0.8M190.4 356.3l-0.5 -0.1M307.8 122.9l-0.3 0.6M209.6 320.3l0.5 -0.6M158.1 69l0.2 -0.3M80.3 404.6l-0.5 0.1M198.7 82.2l-0.2 0.3M119.3 193.1l0.6 0.3M122.2 140.5l-0.2 -0.1M205.7 160.8l-0.6 -0.5M246.2 386.7l0.3 0.3M62.7 386l-0.3 -0.1M265.8 290l0.4 -0.8M36.3 393.5l0.5 -0.7M90.9 209.1l-0.5 -0.5M361.4 270.9l-0.2 0.4M85.2 124.2l-0.5 0.6M56.7 100.3l0.6 0.5M190.5 56.1l0.4 0.4M70.9 130.5l0.4 0.4M299.9 243.4l-0.5 0.4M268.8 236.8l-0.1 -0.5M44.9 69.1l-0.4 0.5M265.5 210.3l-0.1 0.6M343.7 99l-0.5 -0.1M284.2 365.9l0.5 0.3M270.2 162.4l-0.4 0.1M89 391.4l0.3 -0.4M361.7 168.9l-0.6 -0.3M247.1 300.9l-0.5 -0.6M78 170.9l-0.2 -0.7M138.3 287.7l-0.5 0.2M200.2 77.3l-0 -0.8M292.5 371.2l0.7 -0.5M112.5 160.1l0.1 0.4M84.3 220.4l0.4 0.4M336.6 259.4l-0.3 0.1M48.1 51.5l-0.5 -0.6M119.7 112.9l-0.2 -0M130.3 182.1l-0.6 0.5M302.4 311.5l-0.1 0.4M52.6 109.1l-0.2 -0.7M26.2 259.5l-0.1 0.3M161.1 352.4l-0.7 0.4M275.6 180.4l0.3 -0.7M13.8 283.1l0.5 -0.3M105.8 89.4l-0.4 -0.6M109.1 245.8l-0.3 -0.4M216 66.1l-0.4 0.7M113.8 250.9l0.8 0.7M272.8 243.5l-0.4 -0.6M50 70.3l0.5 0.3M87.7 318.7l-0.7 -0.5M313.9 410.3l-0.1 0.2M51.4 256.1l-0.6 0.3M90.1 138.7l0.4 0M306.1 346.7l-0.7 -0.3M47.2 128.4l0.4 -0.5M121 81.2l0.4 0.1M77.6 165.3l0.7 0.5M23.6 334.9l-0.6 0M72 338.2l0.4 -0.5M344 298l0.3 -0.7M13 368.1l-0.7 0M130.5 75.9l0.2 -0.7M323.1 69.1l-0.2 -0.1M245.7 400.7l0.1 0.5M188.8 328.9l-0 -0.4M261 160.1l-0.7 -0.1M295.1 295.8l-0.5 -0.2M241.7 388.5l0 0.4M225.1 286.9l0.2 -0.7M293.2 339.8l0.4 0.6M98.2 262.5l0.1 0.6M218.4 387l0.6 -0.7M250.2 193.1l0.2 0.4M135 187.4l0.7 -0.4M253.2 336l0.3 0.6M165.1 160.7l-0.3 0.2M353.4 367.2l-0 -0.1M119.5 103.5l0.1 -0.7M153.4 218.7l-0.7 -0.3M368.3 118.4l0.6 -0.1M205.2 138l-0.5 0.2M146.9 373.7l-0.2 -0.3M66.2 111.3l-0.2 0.5M328.6 396.8l-0.3 -0.3M326.6 335.7l0.2 0.6M359.6 191.7l-0.8 0.6M49.2 139.5l0.1 0.3M276.4 294.4l0.8 0.4M282.4 290.8l-0.6 0.4M102.9 200.8l0 -0.3M107.6 157.5l-0.3 0.3M258.4 388.6l0.5 -0.7M247 228.6l0.3 -0.8M326.2 370.7l-0.6 -0.2M123.7 235.5l-0.6 0.2M176.7 392.4l-0 -0.8M348.2 148.7l-0.5 0.7M194.4 410.2l-0.5 0.1M364.6 276.8l-0.4 0.4M21.3 248.4l-0.1 -0.7M353.1 281.2l-0 0.8M141.3 376l-0.3 0.5M190 68.4l0.1 0.6M84.1 341.7l-0.7 -0.3M198.9 296.3l0.7 0.1M360.8 330.7l-0.2 0.3M109.8 371.8l-0 0.2M345.2 196.1l0.3 -0.2M126.7 336.6l-0 -0.6M344.4 275.2l0 -0.1M69.4 372.3l-0.7 -0.4M204.3 289.1l0.6 -0.1M39.5 192l0.3 -0.2M303.1 357.5l-0.6 -0.1M16.2 242.6l0.3 -0.3M228.2 180.5l0.8 0.6M326.3 85.7l0.2 0.5M311.5 307.2l0.7 -0.5M75.3 311.3l0.4 -0.6M157 354l0.5 0.5M155.6 230.9l-0.3 0.6M267.7 102.6l0.4 -0.1M344.9 154.9l-0.5 0.3M343.9 75l-0.8 0.1M96.6 206.7l-0.5 0.4M293.9 295.6l0.6 -0.6M91.8 356.9l-0.4 -0.6M113.5 63l0.8 0.7M148.8 154.5l0.2 0.6M150 373.7l0.3 0.4M229.1 234.3l0.2 0.6M123 180.5l0.1 0.6M40.2 59.4l0 -0.6M354.5 129.6l-0.1 0.4M172.4 232.2l0.8 0.1M225.8 62.6l0.1 -0.1M185.7 156.9l0.7 0.7M202.5 133.9l0.1 0.5M113.1 401.6l0.1 0.3M92.1 113.3l0.5 -0.4M146.4 394.6l-0.4 -0.7M52.3 191.5l0.7 -0.1M251.3 368.4l-0.7 -0.2M202.8 287.8l-0.4 0.2M218.6 206.3l0.8 0.6M233.7 119.7l0.2 -0.6M71.4 324.4l-0.7 0.6M17.9 330.9l0.5 0.4M289.6 123.4l0.4 0.5M118.3 334l-0.8 0.4M232.1 56.7l-0.2 -0.1M311.9 282l0.4 0.1M212.2 276.9l0.1 -0.3M139.3 88.9l0.4 0.3M163.1 61.6l0.3 0.4M135.1 359.9l-0.2 0.6M186.5 80.8l-0.3 -0.3M334.1 402.5l0.6 0M102.2 191l-0.2 0.3M348.6 120.5l-0.4 0.5M198.3 329.8l0.4 -0.5M333.8 208.2l-0.6 -0.6M273.3 242.3l-0.8 0.5M361.4 82l0.4 -0.5M217.6 380l0.6 -0.3M212.9 217.2l0.4 0.6M14.6 124.6l-0.2 0.6M47.2 366.9l0.7 -0.1M217.4 382.4l0.3 0.7M285.4 256.3l0.4 0.6M72.7 285.7l0.6 0.8M269.3 220l0.6 0.2M54.5 230.3l-0.2 0.3M299.2 371.1l-0.8 0.1M279.5 131.7l0.4 0.2M99.1 377.9l-0.5 -0.8M179.5 195.7l0.7 0.7M290.3 66.9l0.1 0.1M160.5 65.9l-0.1 -0M355.4 324.4l0.6 -0.6M63.4 241.5l0.2 -0.3M195 395.4l-0.2 0.6M37.9 61.7l0.2 -0.7M213.6 271.6l0.5 0.1M265.4 289.1l0.2 -0.1M252.8 252.6l-0.5 -0.5M194 352.4l-0.5 0.3M276.1 292.8l0.8 0.2M43 238.1l0.3 -0.7M97.8 368.3l0.8 -0.7M110.4 162.3l-0.3 -0M218.9 171.5l-0.5 -0.7M27.6 296.8l0.4 -0.5M150.3 405.1l0.7 0.1M87.7 324.1l0.4 -0.7M19.7 72.2l0.4 0.3M60.5 379l0.5 -0.7M234.1 156.6l-0.4 -0.6M294.8 355.7l-0.8 -0.2M70.2 109.7l0.7 0.2M181.9 275.3l0.4 0.4M129 340.3l-0.8 0.1M134.3 246.8l-0.2 0.5M12.6 328.6l-0.4 -0.3M40.5 109.1l-0.7 0.6M164.6 172.3l-0.7 -0.6M176.4 127.1l-0.7 0.3M99.9 381.2l0.7 0M290.7 278.3l0.2 -0.5M283.1 369.8l0.3 -0.1M54.5 392.2l0.2 0.2M71.7 392.3l-0.3 -0.2M134.7 396.8l-0.7 0.6M242.2 273.6l0.2 0.4M63 76l-0.7 -0.2M40 313.7l0.1 -0.7M38.7 251.6l0.4 0.2M195.2 367l0.7 -0.1M335.1 142.8l-0.2 0.3M74.2 407.1l0.6 0.6M177.4 167.2l-0.5 -0.2M293.6 89.4l-0.5 -0.2M132.5 276l0.6 -0.7M44.1 332.7l0.3 -0.3M106.4 67.4l-0 0.5M32.5 142.4l-0.7 0.1M34.3 157.5l-0.4 0.7M348 178.9l0.1 -0.5M144.6 316.4l-0.2 -0.5M250.1 365.1l0.7 -0.5M285.1 386.6l-0.8 0.2M330.3 325.6l0.6 -0.4M332.5 145.7l-0.8 -0.6M147.5 184l-0.3 -0M187 90.6l0.1 -0M157.3 225.6l0.7 0.7" stroke="#64846a" stroke-width="1.8" stroke-linecap="round" fill="none" opacity="0.85"/><path d="M164.9 72.9l-0.5 -0.4M171.4 137.1l-0.3 -0.7M194.8 225.2l-0.5 0.2M371 385.2l-0.2 -0.7M167 71.1l0 0M125.5 87.5l-0 -0.1M351.7 333.6l-0.6 0.5M238.5 86.3l-0.4 0.5M36.5 304.3l-0 -0.4M194.9 276.9l0.5 0.6M243 298.3l-0.7 0.2M289.4 290.2l-0.6 -0.2M151.1 370.3l-0.3 -0.7M319.9 287.3l0.2 0.3M17.6 216.1l0.4 -0.1M317.2 153.7l0.8 0.5M121.3 164l-0.5 -0.7M21 110.5l-0.2 -0M35.6 185.5l0.6 0.4M253.5 127.4l0.6 -0.5M180.9 162.6l0.5 -0.4M362 323.1l-0.7 -0.5M160.3 306.2l0.1 0.4M97.6 352.3l-0.6 0.5M229.8 222l0.1 -0.2M105.7 253.4l-0.4 -0.1M338.8 410.5l-0.6 -0.3M282.4 111.4l-0.1 -0.7M306.2 335.4l-0.4 0.1M92 105.3l0.4 0.7M267.6 85.1l-0.1 0.5M359.3 376.4l-0.7 0.4M74.9 100.8l-0.7 -0.2M119.8 289.7l0.3 0.1M172.2 230.9l0 0.3M144.7 238.9l0.1 -0.1M224.6 142.2l-0.2 0.6M355.4 282.7l-0.1 0.7M104.4 346.9l0.3 -0.7M257 127.4l-0.3 0.7M171.7 173.4l0.4 0.7M331.4 218.6l-0.3 0.8M363.2 83l0.8 0.1M156 99.2l0.4 -0.2M266.3 187.8l-0 -0.2M370.2 281.3l0.6 -0.6M195 369.4l0.2 0.2M180.6 214.5l-0.3 0.1M135.9 324l-0.3 0.5M260.8 294.5l0.4 -0.2M54.1 277.6l-0.3 0.1M85.2 140.5l0.1 0.4M144.5 357.1l0.2 -0.5M35.2 214.8l0.3 0.4M28.4 374l0.2 -0.1M213.3 61.5l0.5 0.5M42.8 140.6l-0.5 -0.5M335.3 333.7l-0.4 -0.8M41.6 82.9l-0.5 -0M38.3 176.6l-0.3 0.4M326 170.9l0.7 -0.4M107.3 73.8l-0.7 0.8M59.3 363.5l-0.3 0M62.6 268.9l0.8 0.5M281.7 353l-0.1 -0.3M18 163.1l-0.7 -0M35.6 105.8l0.5 -0.1M180.2 344.3l0.2 0.5M181.4 207.8l-0.8 0.7M89.5 353.4l-0.1 0.4M192 238.9l-0.3 -0.7M94.1 59.5l0 -0.5M269.7 214.5l-0.5 -0.5M366.1 409.3l0.6 -0.6M34.3 217.7l-0.3 0.3M256.6 303.7l0.5 -0.2M199.7 161.3l0.4 -0.3M117.4 168l-0.4 -0.5M238 139.3l-0.8 -0.3M293.8 309.6l0.6 0.3M183 162.9l-0.7 0.3M235.9 208.4l-0.7 0.5M196.4 212.9l0.6 0.7M162.2 304.9l0.1 0.4M272.2 164.3l-0.7 0.4M43.5 383.1l-0.6 0.6M350.7 251.7l-0.7 0.3M24.6 287.7l0.6 0.3M134.3 238.1l-0.6 0.3M269 316l-0.7 0.7M252.6 241.8l0.3 -0.3M305.9 268.3l-0.1 -0.4M150.9 341.5l0.3 -0.2M331.9 215.9l0.1 -0.7M350.5 389.3l0.4 -0.2M93.3 117.6l0.5 0.4M153.2 123.7l0.5 0.4M340.7 227.8l0.6 0M300 61l0 0.5M261.6 402.4l0.2 -0.3M273.8 356.5l0.3 0.3M32.2 51l-0.4 -0.2M294.7 142.6l-0.7 -0.7M370.1 133.1l-0.3 0.6M352.9 159.6l0.2 -0.2M113.9 390.4l-0.8 0.3M283.5 328.1l0.1 0.7M305.3 282.9l-0.7 0.6M73.5 105.2l-0.3 0M129 208.3l-0.3 -0.4M268.1 292.5l-0.7 0.6M74 166.1l0.4 0.6M354.7 365.3l0.1 0.7M296.9 354.4l0.8 0.7M180.8 217.2l0.4 0.5M273.9 180.9l-0.7 -0.6M330.3 376.1l-0.8 -0.2M232.8 230.2l-0.7 0.6M241.8 163l-0 -0.2M241.3 370.3l0.1 -0.3M135.8 353l0.4 -0.2M340.3 267l0.8 0.6M36.6 211.6l-0.8 0.7M93.5 126l0.1 0.7M248.5 361.8l0.2 0.1M177.7 255.9l-0.8 -0.6M370.5 117.2l-0.3 0M279.5 87.6l0.5 0.2M32.7 183l0.7 0.4M68.6 280.3l-0.7 -0.1M129.5 408l0 0.8M188.4 321.8l-0.8 0.6M229.1 187.1l0.5 0.6M70.9 57.3l0.2 0.6M52.5 255.9l-0.7 -0.7M193.3 375.5l0.6 0.3M267.8 128.4l-0.1 -0.6M88.6 106.2l-0.1 -0.8M60.9 298.5l0.2 -0.4M89.7 277.3l-0.7 0.4M300.2 376.2l-0.5 0.5M205.3 134.6l0.5 -0.4M74.8 365.1l0.8 0.4M51.4 217.4l0.2 -0.5M312.1 203.8l0 -0M12.6 363.9l0.6 0.6M212.8 200.4l-0.3 -0.5M89.7 246.5l-0.1 0.4M369.8 133l0.6 -0.2M168.5 162.6l0.2 -0.1M63.2 263.3l-0.6 -0.3M161.9 353.4l0.4 0.1M181.8 150.8l0 -0M194.7 231.1l-0.4 -0.2M149.7 76.1l-0.6 0.4M132.5 304.8l0.5 0.2M179 351.5l0.1 -0.7M293.6 222.6l0 0.3M255.5 393.7l0.2 -0.5M246.2 319.8l-0.8 0.3M236.9 295l-0.2 -0.3M217.1 130.1l0.5 -0.5M210.1 285.3l-0.3 -0.6M336.7 402.2l0.2 0.5M170.3 149.9l0 -0.8M209.1 336l-0.3 0.7M53.7 142.6l0.2 0.1M319.7 57l0.5 -0.7M302.9 277.2l-0.8 0.6M115.4 229.2l0.7 -0.2M39.2 126.5l0.4 -0.6M123.7 129.9l-0.1 -0.6M360.7 377.5l-0.6 -0.6M209.8 401.5l0.4 -0.6M312.7 65.4l-0 0.4M163.6 277.6l0.3 -0.5M57.3 159.6l-0.7 -0.5M26 169l0.3 -0.5M178.3 89.6l-0.5 -0.2M349.9 122.3l-0.6 0.6M128.8 198.2l-0.1 -0M20.8 293.4l0.6 -0.5M332.5 336.7l0.2 0.2M171.9 275l0.6 0.5M208.5 369.4l-0.8 -0.1M20.3 279l0.3 0M64.9 68.3l0.5 0M190.3 298.8l-0.5 0.2M191.6 383.2l0.3 0.7M315.2 181.3l0.3 -0.5" stroke="#557a5a" stroke-width="1.9" stroke-linecap="round" fill="none" opacity="0.9"/><path d="M148.6 289.6l-0.3 -0M220.2 403.5l-0.5 0.6M80.5 408.7l-0.5 0.3M232.6 52.5l0.1 -0.3M242.7 252.5l0.5 -0.3M217.9 247.6l0.7 0.6M367 228.1l0.5 -0.7M165.7 80.7l-0.1 -0.3M194.2 304.8l-0.8 0.1M60 186.5l0.6 0.2M168.3 368.7l0.5 -0.7M173.2 183.6l-0.7 0.5M119.5 74.4l-0.4 0.5M85.8 233.8l0 0M288 300.4l0.2 -0.4M242.9 165.4l0.3 0.3M356 67.7l0.5 0.5M118 267.7l0.6 0.4M348.6 177.6l0.6 0.6M105.2 233.3l-0.1 -0.8M41.4 335.8l0.6 -0.5M227.7 366.4l-0.7 -0.3M313.5 270.2l0.7 0.2M284.1 283.2l0.5 -0.4M71 377.3l-0.4 0.6M92.4 144.4l-0.7 -0.5M369.8 159.7l0.8 -0.7M149.5 275.9l0.7 -0.5M161.5 220.1l-0.3 -0.7M149.7 285.9l-0 0M82.3 144.2l0 -0.6M126.3 371.2l0.7 0.6M180.6 387l0.1 -0.6M190.6 401.7l-0.3 -0.3M46.2 187.7l-0.6 0.8M191 152.7l-0.3 0.1M76 328.4l-0.3 -0.1M355.5 214.9l-0.2 0.4M348.8 301.4l-0 0.7M83 395.9l0.3 -0.5M79.6 119.6l-0.3 0.3M266.6 262.2l-0.1 -0.5M37.5 236.4l0.3 0.4M97.2 90.7l-0.3 -0.6M81.3 260l0.3 -0.4M362 82.5l-0.4 0.6M260.8 236.5l-0.2 0.3M203.3 116.1l0.1 0.8M337.3 131.7l-0.5 -0.6M222.2 317.3l0.7 0.3M149.9 408.4l-0.8 0.2M262.5 203.8l0.5 0.6M196.7 205l0.6 -0.8M21.8 70.6l-0.1 0.1M150.3 184.8l-0.2 -0.6M342 184.2l0.1 -0.5M66.4 90.7l0.5 -0.6M123 255.2l-0.6 -0M178.3 321l0.4 -0.4M62.4 384.3l-0.8 0.6M140.3 329.5l0.5 0.1M166.1 222.5l-0.7 0.8M368.3 68.6l0.8 -0.4M25.5 384l-0.5 -0.4M289.9 322.6l-0.3 -0.7M282.9 77.7l0.4 -0.1M258.3 112.9l-0.1 0.7M50.1 235.9l0.7 0.1M190.7 407.3l0.4 0.4M305.9 335.5l-0.3 -0.7M29.2 238.5l0.4 -0.5M157.2 133.4l-0.5 -0.4M174.9 137.5l-0.1 0.3M249.6 87.4l-0.1 0.1M115.3 182.2l-0.4 0.3M130.5 64.6l-0.1 0.6M36.8 81.5l-0.7 -0.5M106.5 277.2l-0.2 0.3M102.8 86.7l0.7 0.1M172.8 73.8l0.1 0.6" stroke="#466850" stroke-width="2.4" stroke-linecap="round" fill="none" opacity="0.9"/><path d="M57.6 75.2l-0.1 0.3M21 117.5l0.8 0.4M295.4 335.5l-0.7 0.5M98.2 130.6l0.7 -0.4M73.2 349.8l-0.1 0.5M70.1 208.6l-0.5 -0.6M207.3 206l-0.4 0.7M248.6 144.8l-0.6 0.5M45 130.6l-0.6 0.6M42.2 161.2l0.1 0.6M280.9 252.3l0.7 -0.1M354.5 333.6l0.5 0.1M123.7 124.5l0.4 -0.6M139.3 252.3l0.8 0.2M248.8 97.3l-0.8 -0.1M226.6 66.7l-0.3 -0.6M237.6 211.5l-0.2 -0M264.9 364.8l0.1 0.1M117.2 349.8l-0.7 -0.4M127.1 296.4l0.4 0.6M266.6 214.8l-0.7 -0.2M246.8 348.4l0.8 -0.1M275.9 143.1l-0.2 -0.8M208.9 174l-0.1 -0.1M230.4 371.4l0.6 -0.3M297.5 173.5l-0 0.4M276.6 118l-0.6 -0.5M333.8 66.6l-0.6 -0.3M162.8 395.8l-0.3 -0.6M67.3 281.9l0.3 -0.2M33.8 293.9l-0.4 -0.7M74.1 70.4l-0.1 -0.6M293.5 234.3l-0.6 -0.4M195.3 409.3l0.8 0.8M152.7 117.9l0.5 0.4M53 166.6l-0.6 -0.7M269.2 125.5l0.1 0.1M95.2 86.4l0.3 0.6M98.4 220.7l0.4 0.6M55.5 256.8l0 0.6" stroke="#586a80" stroke-width="2.0" stroke-linecap="round" fill="none" opacity="0.85"/></g><g filter="url(#bl3)"><path d="M42.7 54 L41.4 54.6 L39.9 54.7 L38.4 54 L38.2 52.5 L39.6 51.8 L40.9 51.3 L42.3 51.7 L43 52.8Z" fill="#38f50c" stroke="#2a5a3a" stroke-width="0.7" stroke-linejoin="round"/><path d="M150.5 52.5 L152.2 52.2 L153.8 52.8 L154.9 53.8 L154.3 55.1 L152.7 55.8 L150.9 55.6 L149.5 54.8 L149.1 53.5Z" fill="#3cf014" stroke="#2b6fd0" stroke-width="1.0" stroke-linejoin="round"/><path d="M167 59.9 L166.7 58 L168.3 56.8 L170.2 56.7 L171.4 58.1 L172.1 59.8 L171.1 61.5 L169.4 62.6 L167.8 61.3Z" fill="#38f50c" stroke="#2a5a3a" stroke-width="0.7" stroke-linejoin="round"/><path d="M24.2 57.1 L24.1 58.1 L23.4 58.9 L22.3 59 L21.4 58.4 L21.4 57.4 L21.6 56.4 L22.5 56 L23.4 56.5Z" fill="#38f50c" stroke="#2a5a3a" stroke-width="0.7" stroke-linejoin="round"/><path d="M70.5 65.6 L70.7 66.4 L70.4 67.3 L69.6 67.7 L68.6 67.6 L68.2 66.6 L68.3 65.7 L68.9 64.9 L69.8 65.1Z" fill="#3cf014" stroke="#2b6fd0" stroke-width="1.0" stroke-linejoin="round"/><path d="M13.8 73.8 L14.2 73 L15 72.6 L15.8 73 L16.3 73.8 L16.3 74.8 L15.5 75.4 L14.5 75.3 L13.9 74.6Z" fill="#38f50c" stroke="#2a5a3a" stroke-width="0.7" stroke-linejoin="round"/><path d="M60.9 79.6 L62.4 79.9 L63.3 80.8 L62.5 81.7 L61.4 82.6 L59.7 82.3 L58.9 81.5 L58.3 80.6 L59.5 80Z" fill="#38f50c" stroke="#2a5a3a" stroke-width="0.7" stroke-linejoin="round"/><path d="M13.6 95.7 L12.8 96.6 L12.1 95.4 L11.8 94.1 L11.7 92.3 L12.7 91.9 L13.7 91.9 L14.2 93.2 L14.2 94.7Z" fill="#38f50c" stroke="#2a5a3a" stroke-width="0.7" stroke-linejoin="round"/><path d="M74.3 99.6 L73.1 99.4 L71.7 99.1 L71.4 97.7 L72.2 96.7 L73.2 96 L74.5 96 L75.1 97.3 L75.1 98.5Z" fill="#38f50c" stroke="#2a5a3a" stroke-width="0.7" stroke-linejoin="round"/><path d="M94.9 97.2 L94.1 99.2 L92.4 99.6 L91.2 98.3 L90.5 96.5 L90.9 94.6 L91.9 92.8 L93.6 93.4 L94.8 94.8Z" fill="#38f50c" stroke="#2a5a3a" stroke-width="0.7" stroke-linejoin="round"/><path d="M173.2 76.5 L174.1 76.9 L174.3 77.9 L174.1 78.9 L173.3 79.5 L172.3 79.3 L171.9 78.5 L171.8 77.6 L172.3 76.9Z" fill="#3f6a45" stroke="#3a5545" stroke-width="0.7" stroke-linejoin="round"/><path d="M46.4 114.5 L45 114.4 L43.9 113.7 L43.8 112.7 L44.6 111.8 L45.9 111.5 L47 112 L47.4 112.8 L47.5 113.8Z" fill="#38f50c" stroke="#2a5a3a" stroke-width="0.7" stroke-linejoin="round"/><path d="M76.2 122.9 L77.2 121.5 L78.9 120.9 L81.2 120.5 L82.1 122 L82.7 123.5 L81.3 124.8 L79 125.2 L77.1 124.4Z" fill="#38f50c" stroke="#2a5a3a" stroke-width="0.7" stroke-linejoin="round"/><path d="M120.4 119.6 L118.1 119.6 L115.8 119.5 L114.6 118.3 L116 117.1 L117.3 116.2 L119.5 116.4 L120.8 117.3 L121.8 118.5Z" fill="#38f50c" stroke="#2a5a3a" stroke-width="0.7" stroke-linejoin="round"/><path d="M16.1 134.5 L16.3 132.2 L17.6 130.4 L19.8 129.7 L21.7 131.2 L21.9 133.7 L21.3 135.9 L19.4 137.7 L17.5 136.1Z" fill="#3cf014" stroke="#2b6fd0" stroke-width="1.0" stroke-linejoin="round"/><path d="M103 134.4 L104.3 134.3 L105.1 135.3 L104.9 136.6 L104.3 137.7 L103.1 137.6 L102 137.1 L101.2 136 L101.8 134.8Z" fill="#38f50c" stroke="#2a5a3a" stroke-width="0.7" stroke-linejoin="round"/><path d="M148.2 141 L147.7 142.9 L146.9 144.2 L145.7 144.5 L144.8 143.2 L144.2 141 L145 139 L146.3 138.4 L147.5 139Z" fill="#38f50c" stroke="#2a5a3a" stroke-width="0.7" stroke-linejoin="round"/><path d="M156 133.9 L156.4 135.3 L156.1 136.8 L155.3 137.9 L154.3 137.7 L153.5 136.4 L153.8 134.8 L154.3 133.6 L155.2 132.8Z" fill="#38f50c" stroke="#2a5a3a" stroke-width="0.7" stroke-linejoin="round"/><path d="M130.8 133.4 L131.1 132.6 L131.9 132.3 L132.7 132.5 L133.3 133.1 L133.4 134.1 L132.6 134.7 L131.7 134.8 L130.9 134.3Z" fill="#38f50c" stroke="#2a5a3a" stroke-width="0.7" stroke-linejoin="round"/><path d="M18.6 157 L19.6 156.4 L20.5 156.8 L21 157.9 L20.8 159.1 L20.3 160.1 L19.3 160.4 L18.4 159.6 L18.5 158.3Z" fill="#38f50c" stroke="#2a5a3a" stroke-width="0.7" stroke-linejoin="round"/><path d="M55.6 159.4 L57.2 160.6 L58.6 162.6 L57.5 164.9 L56.2 167.1 L54.2 166.5 L53.1 164.4 L52.6 162 L53.6 159.6Z" fill="#38f50c" stroke="#2a5a3a" stroke-width="0.7" stroke-linejoin="round"/><path d="M128.8 178.8 L127.6 178.2 L126.8 177.2 L127 175.9 L128.3 175 L129.9 175.4 L131.3 176.1 L131.5 177.5 L130.3 178.4Z" fill="#38f50c" stroke="#2a5a3a" stroke-width="0.7" stroke-linejoin="round"/><path d="M116.9 181.8 L118.3 182.3 L118.8 183.6 L118.2 184.9 L116.6 185.4 L115.2 184.8 L114 183.9 L114.6 182.7 L115.3 181.5Z" fill="#38f50c" stroke="#2a5a3a" stroke-width="0.7" stroke-linejoin="round"/><path d="M146.5 180.2 L146.2 178.9 L147.1 177.8 L148.4 177.7 L149.7 178.1 L149.9 179.4 L149.5 180.5 L148.7 181.5 L147.4 181.1Z" fill="#38f50c" stroke="#2a5a3a" stroke-width="0.7" stroke-linejoin="round"/><path d="M61.6 212.6 L63.1 212.3 L64.4 212.8 L65.5 213.7 L65.2 215.1 L63.6 215.6 L62.1 215.8 L61.2 214.8 L60.6 213.6Z" fill="#38f50c" stroke="#2a5a3a" stroke-width="0.7" stroke-linejoin="round"/><path d="M26.4 218.8 L26.2 217.5 L27.5 216.7 L28.8 217 L29.9 217.8 L29.9 219.2 L28.9 220 L27.8 220.5 L26.5 220.2Z" fill="#38f50c" stroke="#2a5a3a" stroke-width="0.7" stroke-linejoin="round"/><path d="M105.7 216.8 L105.3 218.4 L104 219.6 L102.4 218.9 L101.3 217.9 L101.3 216.5 L101.8 214.9 L103.5 214.3 L104.8 215.5Z" fill="#38f50c" stroke="#2a5a3a" stroke-width="0.7" stroke-linejoin="round"/><path d="M144.8 207.6 L143.3 206.9 L143 205.1 L144.2 204.1 L145.5 203.2 L147.2 203.6 L147.6 205.3 L147.3 206.7 L146.2 207.6Z" fill="#38f50c" stroke="#2a5a3a" stroke-width="0.7" stroke-linejoin="round"/><path d="M167.5 202.2 L168.2 202.9 L168.1 203.7 L167.7 204.7 L166.3 204.6 L165.3 204.1 L164.5 203.3 L165.2 202.4 L166.2 201.8Z" fill="#38f50c" stroke="#2a5a3a" stroke-width="0.7" stroke-linejoin="round"/><path d="M143.6 220.9 L144.5 221.6 L144.1 222.5 L143.1 223.1 L141.9 222.9 L141 222.4 L140.8 221.6 L141.4 220.8 L142.5 220.5Z" fill="#3b82e6" stroke="#5a90d8" stroke-width="0.7" stroke-linejoin="round"/><path d="M180 197.6 L180.9 197.4 L181.7 197.7 L182.2 198.6 L182.1 199.6 L181.2 200.2 L180.2 200 L179.5 199.3 L179.4 198.4Z" fill="#3f6a45" stroke="#3a5545" stroke-width="0.7" stroke-linejoin="round"/><path d="M299.5 75.7 L301.8 76 L303.1 77.6 L302.4 79.3 L300.3 79.9 L298.3 79.7 L296.8 78.9 L295.8 77.3 L297.2 75.8Z" fill="#38f50c" stroke="#2a5a3a" stroke-width="0.7" stroke-linejoin="round"/><path d="M328.2 68.7 L327.6 69.5 L326.7 70.1 L325.3 70.1 L324.6 69.2 L324.8 68.3 L325.4 67.6 L326.6 67.3 L327.5 67.9Z" fill="#38f50c" stroke="#2a5a3a" stroke-width="0.7" stroke-linejoin="round"/><path d="M299.2 89.1 L297.4 89.2 L296.3 87.9 L295.9 86.3 L296.6 84.7 L298.3 84.6 L299.7 85 L300.2 86.3 L300.2 87.8Z" fill="#38f50c" stroke="#2a5a3a" stroke-width="0.7" stroke-linejoin="round"/><path d="M316.4 92.3 L316 91.4 L316.6 90.5 L317.6 90.1 L318.6 90.2 L319.4 90.8 L319.4 91.7 L318.8 92.4 L317.6 92.8Z" fill="#38f50c" stroke="#2a5a3a" stroke-width="0.7" stroke-linejoin="round"/><path d="M284.4 97.5 L285.8 97.5 L287.3 98 L287.9 99.3 L286.7 100.3 L285.3 101 L283.6 100.7 L282.8 99.4 L283.1 98.1Z" fill="#38f50c" stroke="#2a5a3a" stroke-width="0.7" stroke-linejoin="round"/><path d="M201.2 112.4 L203.4 111.7 L205.3 112.7 L206.7 113.9 L206.3 115.4 L204.6 116.4 L202.6 116.2 L200.3 115.7 L200.4 113.9Z" fill="#38f50c" stroke="#2a5a3a" stroke-width="0.7" stroke-linejoin="round"/><path d="M210.8 120.3 L209.8 120.4 L209.2 119.6 L209 118.7 L209.5 117.9 L210.5 117.5 L211.4 117.9 L211.8 118.8 L211.5 119.7Z" fill="#38f50c" stroke="#2a5a3a" stroke-width="0.7" stroke-linejoin="round"/><path d="M254.9 121.7 L255.2 123.4 L254.6 125.1 L253.3 125.5 L252.1 124.9 L251.8 123.1 L252 121.5 L252.9 120.3 L254.2 119.9Z" fill="#38f50c" stroke="#2a5a3a" stroke-width="0.7" stroke-linejoin="round"/><path d="M245.7 133.8 L244.8 134.2 L243.5 134.2 L242.7 133.4 L242.7 132.4 L243.7 131.6 L245 131.7 L246.2 132.1 L246.2 133.1Z" fill="#38f50c" stroke="#2a5a3a" stroke-width="0.7" stroke-linejoin="round"/><path d="M355.6 118.3 L356.6 119 L357 120.3 L356.4 121.5 L355.1 121.8 L353.7 121.6 L353.4 120.3 L353.6 119.3 L354.3 118.3Z" fill="#38f50c" stroke="#2a5a3a" stroke-width="0.7" stroke-linejoin="round"/><path d="M360.2 123.8 L361.2 123.6 L362.1 123.9 L362.4 124.8 L362.3 125.6 L361.8 126.5 L360.7 126.3 L360 125.7 L359.9 124.8Z" fill="#38f50c" stroke="#2a5a3a" stroke-width="0.7" stroke-linejoin="round"/><path d="M298.9 115.9 L298.9 116.9 L298.1 117.5 L297.1 117.6 L296.4 116.9 L296.3 116.1 L296.7 115.3 L297.4 114.8 L298.4 115.1Z" fill="#3b82e6" stroke="#5a90d8" stroke-width="0.7" stroke-linejoin="round"/><path d="M314.3 146.9 L313.3 146.8 L312.6 146 L312.8 145 L313.2 144.2 L314.2 144.2 L315 144.5 L315.3 145.3 L315.1 146.3Z" fill="#38f50c" stroke="#2a5a3a" stroke-width="0.7" stroke-linejoin="round"/><path d="M333.2 154 L335 153.8 L336.8 154 L337.6 155.1 L337.3 156.3 L335.9 157 L334 157.3 L332.8 156.3 L332.4 155.1Z" fill="#38f50c" stroke="#2a5a3a" stroke-width="0.7" stroke-linejoin="round"/><path d="M303.3 159.3 L302.4 158.8 L301.9 158 L302 157 L302.8 156.5 L303.7 156.4 L304.5 157 L304.9 158 L304.3 158.9Z" fill="#3f6a45" stroke="#3a5545" stroke-width="0.7" stroke-linejoin="round"/><path d="M314.1 168.4 L315.2 169 L315.2 170.2 L315 171.5 L313.6 171.6 L312.5 171.3 L311.7 170.4 L312 169.2 L312.9 168.2Z" fill="#38f50c" stroke="#2a5a3a" stroke-width="0.7" stroke-linejoin="round"/><path d="M304.5 178 L304.5 179.8 L303.9 181.6 L302.3 181.8 L300.7 181.4 L300.4 179.4 L300.5 177.5 L301.9 176.5 L303.4 176.7Z" fill="#38f50c" stroke="#2a5a3a" stroke-width="0.7" stroke-linejoin="round"/><path d="M210.1 181.7 L210.2 183.1 L209.8 184.3 L208.3 184.7 L206.7 184.7 L205.7 183.6 L205.5 182.2 L207 181.5 L208.5 181.1Z" fill="#38f50c" stroke="#2a5a3a" stroke-width="0.7" stroke-linejoin="round"/><path d="M261.5 191.6 L261.2 189.8 L261.8 188.3 L262.8 187.2 L264 187.8 L264.8 189.2 L264.4 191 L263.7 192.2 L262.5 192.9Z" fill="#38f50c" stroke="#2a5a3a" stroke-width="0.7" stroke-linejoin="round"/><path d="M316.5 197.7 L315 199.2 L313.2 199.5 L311.4 198.2 L310.9 195.1 L312.1 192.7 L313.9 191.7 L315.7 192.3 L317.1 194.6Z" fill="#38f50c" stroke="#2a5a3a" stroke-width="0.7" stroke-linejoin="round"/><path d="M346.9 214.7 L348.1 216.8 L346.8 219 L344.8 220 L342.2 220.4 L340.8 218.1 L340.8 215.5 L342.2 213.2 L345 213.1Z" fill="#38f50c" stroke="#2a5a3a" stroke-width="0.7" stroke-linejoin="round"/><path d="M349.4 209.1 L348.1 209.7 L346.8 209.1 L346.1 207.9 L346.7 206.7 L347.7 206.1 L348.8 206 L350.1 206.6 L350.3 208Z" fill="#38f50c" stroke="#2a5a3a" stroke-width="0.7" stroke-linejoin="round"/><path d="M368 207.1 L366.8 206.9 L365.9 206 L365.8 204.6 L366.9 203.9 L368 203.2 L369.1 204.1 L369.4 205.3 L369.2 206.5Z" fill="#38f50c" stroke="#2a5a3a" stroke-width="0.7" stroke-linejoin="round"/><path d="M270 229.3 L270 228.4 L271.1 227.9 L272.3 227.7 L273.2 228.3 L273.4 229.1 L273.1 230 L271.9 230.2 L270.6 230.2Z" fill="#38f50c" stroke="#2a5a3a" stroke-width="0.7" stroke-linejoin="round"/><path d="M60.9 230.1 L62.4 230.9 L63.1 232.8 L62.8 234.8 L61.3 235.7 L59.8 235.2 L58.7 234.1 L58.2 232.2 L59.4 230.7Z" fill="#38f50c" stroke="#2a5a3a" stroke-width="0.7" stroke-linejoin="round"/><path d="M44.2 255.4 L43.1 254 L42.4 252 L44.3 250.6 L46.7 250.5 L48.3 251.8 L49 253.5 L47.9 255.1 L46.1 255.9Z" fill="#38f50c" stroke="#2a5a3a" stroke-width="0.7" stroke-linejoin="round"/><path d="M63.3 251.6 L64.2 251.2 L65 251.9 L65 253.2 L64.7 254.2 L63.9 255 L62.9 254.7 L62.6 253.4 L62.6 252.3Z" fill="#38f50c" stroke="#2a5a3a" stroke-width="0.7" stroke-linejoin="round"/><path d="M101.3 278.8 L101.2 277.2 L101.9 275.9 L103.2 275.4 L104.5 275.9 L105 277.6 L104.4 279 L103.4 279.8 L102.2 280.1Z" fill="#38f50c" stroke="#2a5a3a" stroke-width="0.7" stroke-linejoin="round"/><path d="M104.1 329.8 L105.7 330.1 L106.9 331.6 L107.6 334.1 L106.7 336.4 L105.4 337.7 L103.8 337.5 L103 335 L103.4 332.4Z" fill="#38f50c" stroke="#2a5a3a" stroke-width="0.7" stroke-linejoin="round"/><path d="M89.3 377.4 L89.9 378.3 L90.1 379.2 L89 379.8 L87.6 379.9 L86 379.7 L85.5 378.7 L86.3 377.8 L87.7 377.5Z" fill="#38f50c" stroke="#2a5a3a" stroke-width="0.7" stroke-linejoin="round"/><path d="M73.7 392.3 L72.1 391.7 L70.8 390 L71 387.6 L72.1 385.5 L74 385.5 L75.3 387.1 L76.5 389.3 L75.1 391.2Z" fill="#38f50c" stroke="#2a5a3a" stroke-width="0.7" stroke-linejoin="round"/><path d="M57.4 391.4 L56.5 392.1 L55.3 392.3 L53.9 392.2 L53.8 391.1 L53.7 390.1 L54.8 389.5 L56.2 389.6 L57.1 390.4Z" fill="#38f50c" stroke="#2a5a3a" stroke-width="0.7" stroke-linejoin="round"/><path d="M80.2 395.3 L81.2 394 L83 393 L85.4 393.3 L87.7 394.2 L87.5 395.9 L85.7 397.1 L83.2 397.8 L81.1 396.8Z" fill="#38f50c" stroke="#2a5a3a" stroke-width="0.7" stroke-linejoin="round"/><path d="M180.4 399.5 L181 398.6 L182 397.8 L183.2 398.4 L183.8 399.5 L183.6 400.7 L182.5 401.3 L181.3 401.7 L180.4 400.7Z" fill="#38f50c" stroke="#2a5a3a" stroke-width="0.7" stroke-linejoin="round"/><path d="M108.9 382.2 L109.6 382.8 L110.1 383.6 L109.8 384.5 L109 385.1 L108.1 385 L107.6 384.2 L107.4 383.3 L107.8 382.4Z" fill="#38f50c" stroke="#2a5a3a" stroke-width="0.7" stroke-linejoin="round"/><path d="M187.4 366 L186.9 364.9 L186.8 363.6 L187.7 362.7 L189 363 L190 363.5 L190.2 364.7 L189.9 366 L188.6 366.3Z" fill="#3f6a45" stroke="#3a5545" stroke-width="0.7" stroke-linejoin="round"/><path d="M144 311.5 L144.5 313.5 L143.9 315.2 L142.9 316.6 L141.6 316 L140.7 314.5 L140.9 312.7 L141.5 310.9 L142.8 310.9Z" fill="#3f6a45" stroke="#3a5545" stroke-width="0.7" stroke-linejoin="round"/><path d="M241.9 248.1 L242.6 249.1 L242.1 250.4 L240.2 250.6 L238.3 250.6 L237.1 249.5 L237.2 248.2 L238.9 247.5 L240.8 247Z" fill="#38f50c" stroke="#2a5a3a" stroke-width="0.7" stroke-linejoin="round"/><path d="M245.7 238.2 L244.5 238.7 L243.2 238 L242.8 236.7 L243.3 235.4 L244.4 234.6 L245.8 234.9 L246.6 236 L246.4 237.2Z" fill="#38f50c" stroke="#2a5a3a" stroke-width="0.7" stroke-linejoin="round"/><path d="M239.7 257.2 L240.3 258 L240.5 258.8 L240.2 259.8 L239.2 260.2 L238.4 259.6 L237.9 258.8 L237.9 257.8 L238.6 257.1Z" fill="#38f50c" stroke="#2a5a3a" stroke-width="0.7" stroke-linejoin="round"/><path d="M276.7 237.8 L275.3 237 L274.7 235.4 L275.8 234.2 L277 233.6 L278.6 233.5 L279.1 235.1 L279.6 236.6 L278.3 237.8Z" fill="#38f50c" stroke="#2a5a3a" stroke-width="0.7" stroke-linejoin="round"/><path d="M272.6 230.7 L273.6 231.1 L274.4 231.7 L274.5 232.8 L273.3 233.3 L272.1 233.1 L270.8 232.8 L270.6 231.8 L271.4 231Z" fill="#38f50c" stroke="#2a5a3a" stroke-width="0.7" stroke-linejoin="round"/><path d="M344.3 249.1 L346 249.4 L346.3 250.7 L346.6 252.1 L345 252.6 L343.5 252.6 L342 252 L342.3 250.7 L342.6 249.4Z" fill="#38f50c" stroke="#2a5a3a" stroke-width="0.7" stroke-linejoin="round"/><path d="M326.2 267.9 L325.2 267.2 L324.5 266.5 L324.7 265.5 L325.7 264.8 L327.1 264.8 L328.2 265.6 L327.9 266.6 L327.3 267.3Z" fill="#3b82e6" stroke="#5a90d8" stroke-width="0.7" stroke-linejoin="round"/><path d="M328.3 298.8 L330 299 L331.7 299.6 L331.7 300.9 L330.8 302.2 L328.8 302.4 L327.3 301.7 L326.1 300.7 L326.8 299.5Z" fill="#38f50c" stroke="#2a5a3a" stroke-width="0.7" stroke-linejoin="round"/><path d="M258.3 284 L257.1 284 L255.7 283.9 L255.5 282.9 L255.8 282.1 L256.8 281.7 L257.9 281.6 L259 282.2 L259.2 283.2Z" fill="#38f50c" stroke="#2a5a3a" stroke-width="0.7" stroke-linejoin="round"/><path d="M261.5 289.1 L262.5 289.1 L263.3 289.7 L263.4 290.6 L263.2 291.4 L262.3 291.7 L261.5 291.5 L260.7 290.9 L261.1 290Z" fill="#38f50c" stroke="#2a5a3a" stroke-width="0.7" stroke-linejoin="round"/><path d="M283.3 318.6 L283.4 319.5 L283.1 320.3 L282.3 320.5 L281.2 320.6 L280.8 319.6 L281.1 318.7 L281.7 318.1 L282.6 318.1Z" fill="#38f50c" stroke="#2a5a3a" stroke-width="0.7" stroke-linejoin="round"/><path d="M286 323.5 L286.8 322.9 L287.7 322.9 L288.4 323.6 L288.7 324.5 L288.2 325.4 L287.2 325.4 L286.3 325.2 L285.9 324.4Z" fill="#38f50c" stroke="#2a5a3a" stroke-width="0.7" stroke-linejoin="round"/><path d="M223.7 310.8 L222.3 311.7 L220.9 311.1 L219.5 310 L219.6 307.8 L221 306.7 L222.5 306.2 L223.6 307.5 L224 309.1Z" fill="#38f50c" stroke="#2a5a3a" stroke-width="0.7" stroke-linejoin="round"/><path d="M208.7 325.7 L207.6 326.6 L206.1 326.8 L204.8 326.1 L204.5 324.9 L204.8 323.7 L206.3 323.1 L207.9 323.4 L208.6 324.5Z" fill="#38f50c" stroke="#2a5a3a" stroke-width="0.7" stroke-linejoin="round"/><path d="M248.5 324.3 L248 325.2 L247.1 325.8 L246.2 325.3 L245.5 324.6 L245.6 323.7 L246.2 322.9 L247.2 323 L248 323.4Z" fill="#38f50c" stroke="#2a5a3a" stroke-width="0.7" stroke-linejoin="round"/><path d="M228 344.4 L226.2 344.7 L224.6 343.7 L223.4 341.3 L224.4 338.7 L225.8 336.5 L227.8 336.9 L229.1 339.3 L229.3 342.2Z" fill="#38f50c" stroke="#2a5a3a" stroke-width="0.7" stroke-linejoin="round"/><path d="M221.8 349.1 L222.6 348.7 L223.5 348.8 L223.8 349.7 L224.1 350.6 L223.4 351.4 L222.4 351.3 L221.6 350.8 L221.3 349.9Z" fill="#38f50c" stroke="#2a5a3a" stroke-width="0.7" stroke-linejoin="round"/><path d="M293.2 356.6 L293.7 358.2 L292.9 359.5 L291.8 361 L289.7 360.7 L288.3 359.4 L288.2 357.8 L289.6 356.7 L291.3 356Z" fill="#38f50c" stroke="#2a5a3a" stroke-width="0.7" stroke-linejoin="round"/><path d="M314.6 342.8 L314 344.8 L312.6 346 L310.7 346.1 L309.3 344.3 L309.4 342.1 L310.5 340.3 L312.3 339.9 L313.9 341Z" fill="#38f50c" stroke="#2a5a3a" stroke-width="0.7" stroke-linejoin="round"/><path d="M359.3 363.7 L358.4 363.2 L358.2 361.8 L358.7 360.6 L359.7 360.2 L360.6 360.8 L361.1 361.9 L360.8 363.1 L360.2 364Z" fill="#38f50c" stroke="#2a5a3a" stroke-width="0.7" stroke-linejoin="round"/><path d="M247.2 368.3 L247.8 367.2 L248.6 366.6 L249.7 366.6 L250.2 367.8 L249.9 369 L249.4 370 L248.5 370.2 L247.6 369.6Z" fill="#38f50c" stroke="#2a5a3a" stroke-width="0.7" stroke-linejoin="round"/><path d="M267.7 372.2 L269.1 372.9 L269.2 374.1 L268.3 375 L266.7 375.6 L265 375 L263.7 374 L264.5 372.7 L266.1 372.2Z" fill="#38f50c" stroke="#2a5a3a" stroke-width="0.7" stroke-linejoin="round"/><path d="M317.5 386.6 L319.8 387 L321 388.7 L320.9 390.6 L319.6 392.4 L317 392.9 L315 391.4 L314.6 389.3 L315.3 387.4Z" fill="#38f50c" stroke="#2a5a3a" stroke-width="0.7" stroke-linejoin="round"/><path d="M310.7 408.1 L310.5 405.9 L311.7 403.9 L314.3 402.6 L316.8 404.1 L318.5 406.3 L317.3 408.7 L315.3 410.8 L312.4 409.8Z" fill="#38f50c" stroke="#2a5a3a" stroke-width="0.7" stroke-linejoin="round"/><path d="M218 303.1 L217.9 301.8 L218.6 300.8 L219.7 300.8 L220.5 301.7 L220.4 303 L220.2 304.3 L219.2 304.8 L218.3 304.4Z" fill="#38f50c" stroke="#2a5a3a" stroke-width="0.7" stroke-linejoin="round"/><path d="M367.4 275.5 L366.6 276.2 L365.4 276.3 L364.4 275.8 L363.8 274.9 L364.4 274 L365.6 273.7 L366.9 273.8 L367.5 274.6Z" fill="#3f6a45" stroke="#3a5545" stroke-width="0.7" stroke-linejoin="round"/><path d="M234.8 112.5 L237 111 L239.5 113 L240.5 116 L243.5 118.5 L246.5 120 L248.3 123 L246.5 124.5 L243 122.5 L239.5 120 L236.5 117.5 L235 115Z" fill="#38f50c" stroke="#2a5a3a" stroke-width="0.7" stroke-linejoin="round"/><path d="M52.2 181.1 L56.4 181.5 L58.9 183.8 L59.1 188.2 L57.4 190.7 L56.8 194.9 L55.5 198.8 L52.6 199.1 L50.7 195.9 L50.7 192 L49.3 189.2 L49.7 184.4Z" fill="#38f50c" stroke="#2a5a3a" stroke-width="0.7" stroke-linejoin="round"/><path d="M51.6 200.7 L56.4 200.1 L57.4 202.6 L55.5 204.5 L54.5 206.8 L52.2 206 L50.7 203Z" fill="#38f50c" stroke="#2a5a3a" stroke-width="0.7" stroke-linejoin="round"/><path d="M35.3 229.4 L39.2 229.8 L41.5 232.3 L42 236.1 L44.3 239 L44 243.2 L39.2 244.4 L35.3 243.2 L34 239 L35 235.2 L33.8 232.3Z" fill="#38f50c" stroke="#2a5a3a" stroke-width="0.7" stroke-linejoin="round"/><path d="M39.7 313.2 L42.3 311.7 L48.3 312.2 L49.2 315.4 L46.6 317.5 L41.2 318.6 L39.1 316.5Z" fill="#38f50c" stroke="#2a5a3a" stroke-width="0.7" stroke-linejoin="round"/><path d="M62.8 326.8 L65.6 325.5 L68.1 329.4 L71.4 336.9 L69.9 339.1 L66.4 334.8 L63.4 330.5Z" fill="#38f50c" stroke="#2a5a3a" stroke-width="0.7" stroke-linejoin="round"/><path d="M74 334.5 L75.6 335 L75.4 339.5 L73.8 339Z" fill="#38f50c" stroke="#2a5a3a" stroke-width="0.7" stroke-linejoin="round"/><path d="M66.4 342.3 L71.4 340.6 L74.6 341.9 L78.9 340.1 L82.8 342.3 L83.6 347 L81.1 351.3 L76.8 349.8 L73.5 352 L69.9 352.6 L67.1 348.8 L65.6 345.5Z" fill="#38f50c" stroke="#2a5a3a" stroke-width="0.7" stroke-linejoin="round"/><path d="M21.8 361.7 L24.6 362.8 L25.5 365.6 L23.4 369.2 L21.2 367.7 L20.8 363.8Z" fill="#38f50c" stroke="#2a5a3a" stroke-width="0.7" stroke-linejoin="round"/><path d="M14.7 401.5 L17.5 400.4 L21.8 401.5 L24 398.3 L27.7 397.2 L31.5 400 L32 403 L29.4 405.8 L25.1 406.9 L21.8 405.2 L18.6 405.8 L15.4 404.7Z" fill="#38f50c" stroke="#2a5a3a" stroke-width="0.7" stroke-linejoin="round"/><path d="M208.7 62.3 L213.9 61.6 L217.4 66.3 L215.8 70.4 L211.5 73.4 L208 73.9 L207.3 68.7Z" fill="#38f50c" stroke="#2a5a3a" stroke-width="0.7" stroke-linejoin="round"/><path d="M311.1 68 L313.5 69.4 L314.2 74.6 L316.5 78.1 L313 79.8 L309.5 76.5 L308.3 73.4Z" fill="#38f50c" stroke="#2a5a3a" stroke-width="0.7" stroke-linejoin="round"/><path d="M360.9 71.1 L364.9 68.7 L369.2 66.3 L371.5 67 L371.5 76.5 L368.5 77.4 L364.9 76.5 L362.6 73.4Z" fill="#38f50c" stroke="#2a5a3a" stroke-width="0.7" stroke-linejoin="round"/><path d="M346.6 288.4 L351.3 287.5 L355.5 291.2 L358.9 296.8 L358.3 301.8 L355 300.1 L349.9 295.4 L346.6 291.7Z" fill="#38f50c" stroke="#2a5a3a" stroke-width="0.7" stroke-linejoin="round"/><path d="M277.9 307.4 L280.7 309.3 L279.6 313.5 L275.1 316.3 L273.2 313 L275.1 310.2Z" fill="#38f50c" stroke="#2a5a3a" stroke-width="0.7" stroke-linejoin="round"/><path d="M274 340.9 L277.3 344.2 L280.7 349.8 L282.9 354 L278.7 356.8 L274.5 357.6 L272.3 353.2 L271.2 347Z" fill="#38f50c" stroke="#2a5a3a" stroke-width="0.7" stroke-linejoin="round"/><line x1="251.5" y1="220.5" x2="262" y2="210.5" stroke="#2a5a3a" stroke-width="4" stroke-linecap="round"/><line x1="119.8" y1="250" x2="125" y2="257.3" stroke="#2a5a3a" stroke-width="3.6" stroke-linecap="round"/><line x1="125" y1="257.3" x2="135" y2="251.6" stroke="#2a5a3a" stroke-width="3.6" stroke-linecap="round"/><line x1="203.5" y1="399" x2="214" y2="392" stroke="#2a5a3a" stroke-width="4.4" stroke-linecap="round"/><line x1="251.5" y1="220.5" x2="262" y2="210.5" stroke="#3cf014" stroke-width="3" stroke-linecap="round"/><line x1="119.8" y1="250" x2="125" y2="257.3" stroke="#3cf014" stroke-width="2.6" stroke-linecap="round"/><line x1="125" y1="257.3" x2="135" y2="251.6" stroke="#3cf014" stroke-width="2.6" stroke-linecap="round"/><line x1="203.5" y1="399" x2="214" y2="392" stroke="#3cf014" stroke-width="3.4" stroke-linecap="round"/></g></svg>
<svg style="position:absolute;left:0;top:43px" width="372" height="369" viewBox="0 43 372 369" font-size="4.6" fill="#ececec">
<text x="35.5" y="48.7" text-anchor="middle">12,15</text><text x="56.4" y="48.7" text-anchor="middle">12,2</text><text x="77.3" y="48.7" text-anchor="middle">12,25</text><text x="98.2" y="48.7" text-anchor="middle">12,3</text><text x="119.1" y="48.7" text-anchor="middle">12,35</text><text x="140" y="48.7" text-anchor="middle">12,4</text><text x="160.9" y="48.7" text-anchor="middle">12,45</text><text x="181.8" y="48.7" text-anchor="middle">12,5</text><text x="202.7" y="48.7" text-anchor="middle">12,55</text><text x="223.6" y="48.7" text-anchor="middle">12,6</text><text x="244.5" y="48.7" text-anchor="middle">12,65</text><text x="265.4" y="48.7" text-anchor="middle">12,7</text><text x="286.3" y="48.7" text-anchor="middle">12,75</text><text x="307.2" y="48.7" text-anchor="middle">12,8</text><text x="328.1" y="48.7" text-anchor="middle">12,85</text><text x="349" y="48.7" text-anchor="middle">12,9</text><text x="369.3" y="48.7" text-anchor="end">mm</text><text transform="translate(8.6 69.5) rotate(-90)" text-anchor="middle">13,05</text><text transform="translate(8.6 90.4) rotate(-90)" text-anchor="middle">13,1</text><text transform="translate(8.6 111.3) rotate(-90)" text-anchor="middle">13,15</text><text transform="translate(8.6 132.2) rotate(-90)" text-anchor="middle">13,2</text><text transform="translate(8.6 153.1) rotate(-90)" text-anchor="middle">13,25</text><text transform="translate(8.6 174) rotate(-90)" text-anchor="middle">13,3</text><text transform="translate(8.6 194.9) rotate(-90)" text-anchor="middle">13,35</text><text transform="translate(8.6 215.8) rotate(-90)" text-anchor="middle">13,4</text><text transform="translate(8.6 236.7) rotate(-90)" text-anchor="middle">13,45</text><text transform="translate(8.6 257.6) rotate(-90)" text-anchor="middle">13,5</text><text transform="translate(8.6 278.5) rotate(-90)" text-anchor="middle">13,55</text><text transform="translate(8.6 299.4) rotate(-90)" text-anchor="middle">13,6</text><text transform="translate(8.6 320.3) rotate(-90)" text-anchor="middle">13,65</text><text transform="translate(8.6 341.2) rotate(-90)" text-anchor="middle">13,7</text><text transform="translate(8.6 362.1) rotate(-90)" text-anchor="middle">13,75</text><text transform="translate(8.6 383) rotate(-90)" text-anchor="middle">13,8</text><text transform="translate(8.6 409) rotate(-90)" text-anchor="start">mm</text><path d="M18.8 50 v1 M23 50 v1 M27.1 50 v1 M31.3 50 v1 M35.5 50 v1 M39.7 50 v1 M43.9 50 v1 M48 50 v1 M52.2 50 v1 M56.4 50 v1 M60.6 50 v1 M64.8 50 v1 M68.9 50 v1 M73.1 50 v1 M77.3 50 v1 M81.5 50 v1 M85.7 50 v1 M89.8 50 v1 M94 50 v1 M98.2 50 v1 M102.4 50 v1 M106.6 50 v1 M110.7 50 v1 M114.9 50 v1 M119.1 50 v1 M123.3 50 v1 M127.5 50 v1 M131.6 50 v1 M135.8 50 v1 M140 50 v1 M144.2 50 v1 M148.4 50 v1 M152.5 50 v1 M156.7 50 v1 M160.9 50 v1 M165.1 50 v1 M169.3 50 v1 M173.4 50 v1 M177.6 50 v1 M181.8 50 v1 M186 50 v1 M190.2 50 v1 M194.3 50 v1 M198.5 50 v1 M202.7 50 v1 M206.9 50 v1 M211.1 50 v1 M215.2 50 v1 M219.4 50 v1 M223.6 50 v1 M227.8 50 v1 M232 50 v1 M236.1 50 v1 M240.3 50 v1 M244.5 50 v1 M248.7 50 v1 M252.9 50 v1 M257 50 v1 M261.2 50 v1 M265.4 50 v1 M269.6 50 v1 M273.8 50 v1 M277.9 50 v1 M282.1 50 v1 M286.3 50 v1 M290.5 50 v1 M294.7 50 v1 M298.8 50 v1 M303 50 v1 M307.2 50 v1 M311.4 50 v1 M315.6 50 v1 M319.7 50 v1 M323.9 50 v1 M328.1 50 v1 M332.3 50 v1 M336.5 50 v1 M340.6 50 v1 M344.8 50 v1 M349 50 v1 M353.2 50 v1 M357.4 50 v1 M361.5 50 v1 M365.7 50 v1" stroke="#bbb" stroke-width="0.5"/>
</svg>
<!-- scale bar -->
<div style="left:321.7px;top:396.4px;width:45.4px;height:10.3px;background:#fff;box-sizing:border-box;border:0.8px solid #777;border-top:1.5px solid #333;border-radius:1.5px;box-shadow:0 0.5px 1px rgba(0,0,0,.5);color:#333;font-size:5.3px;line-height:6px;padding-top:1.7px;text-align:center">100 µm</div>
<!-- overview -->
<div class="h" style="left:379px;top:29px;transform:scaleX(.88)">Sample overview</div>
<div class="ul" style="left:379px;top:36px;width:164.5px"></div>
<svg style="position:absolute;left:379px;top:40px" width="165" height="165" viewBox="379 40 165 165"><defs><clipPath id="cp"><path d="M379 40 H544 V186.3 H479.4 V195 H379 Z"/></clipPath><clipPath id="cc"><circle cx="461.3" cy="122" r="80.3"/></clipPath><filter id="ob" x="-50%" y="-50%" width="200%" height="200%"><feGaussianBlur stdDeviation="4"/></filter><filter id="ob2"><feGaussianBlur stdDeviation="0.35"/></filter><radialGradient id="rg" gradientUnits="userSpaceOnUse" cx="461.3" cy="122" r="80.3"><stop offset="0" stop-color="#e6e7e6"/><stop offset="0.6" stop-color="#eaebea"/><stop offset="1" stop-color="#ffffff"/></radialGradient><filter id="nz2" x="0" y="0" width="100%" height="100%" color-interpolation-filters="sRGB"><feTurbulence type="fractalNoise" baseFrequency="0.28" numOctaves="3" seed="11"/><feColorMatrix type="matrix" values="0 0 0 0 0  0 0 0 0 0  0 0 0 0 0.02  0.2 0 0 0 0.04"/></filter></defs><rect x="379.5" y="40.5" width="164" height="164" fill="#303030" stroke="#4d5056" stroke-width="1"/><circle cx="461.3" cy="122" r="80.3" fill="none" stroke="#4a6a7c" stroke-width="0.6"/><g clip-path="url(#cp)"><g clip-path="url(#cc)"><circle cx="461.3" cy="122" r="80.3" fill="url(#rg)"/><rect x="379" y="40" width="165" height="165" filter="url(#nz2)"/><g filter="url(#ob2)"><path d="M527.2 125.9h0.1M404 148.6h0.1M422.4 162.6h0.1M427.8 105.6h0.1M477.7 183.1h0.1M410.3 101.5h0.1M420.3 174.2h0.1M481.4 111h0.1M501.2 76.8h0.1M462 61h0.1M438.9 63h0.1M427.5 77.2h0.1M402.5 147.4h0.1M431.6 101h0.1M515.4 115.9h0.1M496 92.7h0.1M472.5 56.7h0.1M444.1 185.7h0.1M506.5 174.5h0.1M481.2 62.4h0.1M485.3 87h0.1M427.3 123.8h0.1M527.3 78.6h0.1M451.8 129.1h0.1M439.3 194.8h0.1M472 150.5h0.1M424.9 143.9h0.1M418.6 165.6h0.1M503.9 111.9h0.1M464.4 71h0.1M427.7 80.2h0.1M515.4 78.3h0.1M428.1 53.3h0.1M425.6 175.7h0.1M528 109.6h0.1M467.9 159.5h0.1M474.2 52.2h0.1M457.6 168.4h0.1M453 58.6h0.1M450 177.8h0.1M489.5 113.5h0.1M419.3 169.6h0.1M430.3 169.4h0.1M440.3 132.4h0.1M511.2 96.2h0.1M423.2 164.7h0.1M468.3 107.2h0.1M406.2 152h0.1M458.7 155.8h0.1M385.4 122.7h0.1M462.8 162.4h0.1M447 86.2h0.1M461.9 161.5h0.1M480.1 176.4h0.1M506 170h0.1M387.6 124.8h0.1M447.9 135.7h0.1M441.8 89.2h0.1M406.8 116h0.1M506 135h0.1M501.7 146h0.1M404.6 127.3h0.1M520.3 71.6h0.1M422.4 80.1h0.1M490.3 161.2h0.1M441.4 179.3h0.1M450 141.3h0.1M391.5 131.5h0.1M479.9 189.4h0.1M516.6 129h0.1M425.9 124.7h0.1M383 120.8h0.1M441.1 72h0.1M498.1 114h0.1M465.4 76h0.1M481.8 150h0.1M401.8 99.1h0.1M447 139h0.1M507.7 157.6h0.1M443 182.2h0.1M479.7 71.1h0.1M455.5 168.2h0.1M489.9 55.4h0.1M474.1 152.9h0.1M474.6 166.7h0.1M431.2 105.1h0.1M458.4 102.2h0.1M433.1 71.5h0.1M470.7 108.3h0.1M501.8 163.1h0.1M384.4 127.8h0.1M439.9 88.2h0.1M505.2 96.2h0.1M408.3 99h0.1M454.3 175.5h0.1M481 193.2h0.1M461.9 135.3h0.1M418.3 72.9h0.1M454.5 177h0.1M412.7 179.5h0.1M400.4 148.5h0.1M382.4 119.1h0.1M400.5 122.7h0.1M504.1 61.3h0.1M437 138.5h0.1M465.6 89h0.1M469.9 72.2h0.1M501.4 82.3h0.1M499.3 104.3h0.1M484.5 135.7h0.1M504.3 100.8h0.1M521.2 164.3h0.1M428.1 114.7h0.1M432 118.8h0.1M493.3 142.9h0.1M463.6 139.1h0.1M471.4 144h0.1M387.9 132.5h0.1M419.9 60.2h0.1M473.7 171.2h0.1M461.4 58.7h0.1M502.1 173.4h0.1M408.2 134.4h0.1M518.5 137.6h0.1M473 166.4h0.1M517.4 83.5h0.1M435.9 131.9h0.1M460.5 76h0.1M384.7 112.4h0.1M434.3 107.5h0.1M454.3 106.1h0.1M460.5 128.7h0.1M415.7 97.9h0.1M504.4 137.1h0.1M447 107.2h0.1M464.9 179.2h0.1M431 118.7h0.1M458.3 165.3h0.1M420.4 88.7h0.1M449.4 146.1h0.1M428.1 122.9h0.1M472.4 132.4h0.1M432.9 109.7h0.1M524.8 143.2h0.1M505.9 74.4h0.1M525.1 81.1h0.1M467.4 186.8h0.1M392.9 145.1h0.1M514.5 68.4h0.1M435.8 131.3h0.1M489.2 187.8h0.1M473 75.4h0.1M419.3 180.3h0.1M441.6 54.3h0.1M528.5 82h0.1M428.5 138.9h0.1M452.7 69.7h0.1M399.4 88.1h0.1M525.3 94.9h0.1M506.6 170.4h0.1M512.1 124.5h0.1M393.9 120.7h0.1M522.2 121.6h0.1M426.9 135.8h0.1M480 107.1h0.1M405.5 74.8h0.1M453.3 65.3h0.1M527.6 107.8h0.1M529.4 151.6h0.1M500.8 126.7h0.1M491.9 108.9h0.1M388.3 122h0.1M418.6 136.6h0.1M481.8 193h0.1M431.4 115.2h0.1M502.1 116.8h0.1M517.2 87.4h0.1M397.4 144.4h0.1M443.5 186.2h0.1M475.7 182.3h0.1M416.1 94.4h0.1M509.5 74.4h0.1M494.6 185.7h0.1M436.5 191.1h0.1M492.3 118.1h0.1M449.7 135.1h0.1M490.6 65.3h0.1M495.3 190.1h0.1M443.2 153.3h0.1M533 113.2h0.1M513.8 176.9h0.1M533.2 121.1h0.1M400.1 117.1h0.1M502.8 170.5h0.1M530.7 115.1h0.1M455.1 187h0.1M460.7 87.7h0.1M484.6 116.2h0.1M494.8 149.4h0.1M399.8 122.3h0.1M533.2 115.3h0.1M476.3 58.3h0.1M455.2 104.5h0.1M459.3 62.2h0.1M428.4 71.6h0.1M520.5 130.6h0.1M476 105.4h0.1M410.3 68.5h0.1M480.9 174h0.1M392.6 102.5h0.1M391.1 142.8h0.1M434.4 196.4h0.1M466.5 72.1h0.1M474.2 52.9h0.1M398 100.2h0.1M459.4 44.5h0.1M498.2 72.4h0.1M450.1 78.1h0.1M452 183.4h0.1M468.4 191.8h0.1M503.6 147h0.1M403.8 93.1h0.1M439.3 156.9h0.1M409 69.7h0.1M516.6 107.9h0.1M444.4 180h0.1M508 85.8h0.1M508.6 131.2h0.1M432.1 119.5h0.1M510.3 106.2h0.1M433 106.4h0.1M445.1 138.8h0.1M418.5 63.2h0.1M480.5 125.1h0.1M479.1 162.1h0.1M492.5 54.9h0.1M516.5 109.7h0.1M502.4 184.8h0.1M426.4 75h0.1M452 154h0.1M411 138.8h0.1M479.9 161.6h0.1M491.1 156h0.1M464.3 170.3h0.1M475.1 65.8h0.1M419 88.9h0.1M460.8 97.5h0.1M461.6 62.8h0.1M409.7 68.9h0.1M404.7 96.6h0.1M487.6 159.2h0.1M468.5 113.7h0.1M488.9 141.5h0.1M508.9 102h0.1M499.6 108.7h0.1M525.9 145.4h0.1M457.2 149.8h0.1M424.5 174.6h0.1M508.9 97.2h0.1M451.7 108.4h0.1M439 185.1h0.1M497.2 148.5h0.1M524.3 144.9h0.1M396.8 109.5h0.1M424.8 168.5h0.1M416.4 93.3h0.1M475 138.1h0.1M503.8 75.4h0.1M438.9 61.6h0.1M446.9 128.8h0.1M499.2 103.2h0.1M490.5 105.1h0.1M511.1 91.7h0.1M487.9 151.5h0.1M428.1 51.8h0.1M402.7 144.4h0.1M462.6 119.6h0.1M464.1 159.6h0.1M449.6 54h0.1M505.2 100.6h0.1M483.6 100.9h0.1M505.1 62.8h0.1M464.6 61.7h0.1M531.4 107.7h0.1M534 124.1h0.1M466.4 166.4h0.1M395.7 96.6h0.1M474.5 115.2h0.1M435.3 133.1h0.1M440.9 102h0.1M408.8 84.3h0.1M430 178h0.1M442.5 46h0.1M444.8 65.3h0.1M454.1 119.7h0.1M389.7 132h0.1M413.4 157.9h0.1M516.3 131.6h0.1M508.2 94.3h0.1M504 148.5h0.1M468.3 186h0.1M429.4 79.7h0.1M390.4 104.4h0.1M516.3 96.7h0.1M403.9 111h0.1M388.3 128.4h0.1M498.2 118.6h0.1M415 143.6h0.1M394.3 118h0.1M387.7 102.1h0.1M443 90.7h0.1M464.1 160.9h0.1M434 164.3h0.1M459.1 131.5h0.1M394.9 159.4h0.1M472.9 73.7h0.1M451.4 53.4h0.1M404.8 93.8h0.1M487.2 168.9h0.1M492.5 82.5h0.1M524.6 166.5h0.1M433.4 178.9h0.1M448.1 121.4h0.1M447.9 46.4h0.1M487 93.7h0.1M419 167.6h0.1M424.8 94.8h0.1M395.1 84.7h0.1M409 166.9h0.1M531.7 96.8h0.1M428.8 181h0.1M473.3 94.5h0.1M464.3 110.3h0.1M503.6 61.6h0.1M384.8 140.9h0.1M446.8 156.3h0.1M457.6 122h0.1M472.2 171.7h0.1M459 167.7h0.1M440 117.3h0.1M396.4 108.3h0.1M447.7 105.4h0.1M398.3 99.1h0.1M416.7 162.7h0.1M519.7 84.9h0.1M454.2 132.2h0.1M458.5 131.7h0.1M479.6 127.9h0.1M406.5 103.6h0.1M402.1 137.8h0.1M430.8 171.3h0.1M460.6 146.9h0.1M527.4 104h0.1M476.6 50.4h0.1M424.6 134.1h0.1M490.5 182.6h0.1M489 50.3h0.1M422.8 182.8h0.1M392 133.4h0.1M461 184.6h0.1M396.9 89.9h0.1M529.1 162h0.1M390.3 102.7h0.1M527.7 147.1h0.1M482.8 80.7h0.1M400 161.9h0.1M451.4 155.5h0.1M431.3 56.3h0.1M434 114.1h0.1M404 143.6h0.1M432.3 61.3h0.1M443.7 45.1h0.1M533.4 134.5h0.1M453 139.7h0.1M458 160.9h0.1M503.3 154.9h0.1M519.1 95.5h0.1M466.2 159.8h0.1M510.8 157.3h0.1M501.1 156.2h0.1M538.1 119.3h0.1M476.5 69.6h0.1M488.2 163h0.1M406.2 140.8h0.1M450.7 99.7h0.1M409.5 101.2h0.1M496.2 139.3h0.1M482 51.6h0.1M517.8 154.9h0.1M394.4 163.2h0.1M440.2 142.5h0.1M498.2 79.9h0.1M499.8 103.7h0.1M512.2 156.7h0.1M486.6 102.8h0.1M418.6 166.1h0.1M476.5 86.4h0.1M393.6 146.1h0.1M496.7 78.1h0.1M403 124.1h0.1M468.3 92.8h0.1M471.5 193.9h0.1M451 140.5h0.1M486.2 144.8h0.1M385.3 140.5h0.1M500.7 84.5h0.1M411.7 156.7h0.1M427.1 117.5h0.1M538 114.1h0.1M509.8 171.3h0.1M436.1 159.7h0.1M477.5 184h0.1M488.4 193.8h0.1M483.8 194.1h0.1M533.7 93.8h0.1M458.5 49h0.1M521.9 145.1h0.1M527.9 127.8h0.1M473.2 118.2h0.1M537.4 103h0.1" stroke="#58d63c" stroke-width="1.1" stroke-linecap="round" fill="none" opacity="0.6"/><path d="M496.3 62.9h0.1M416.3 179.2h0.1M524.3 128.6h0.1M422.9 84.9h0.1M434.4 105.5h0.1M494.9 63.8h0.1M402.7 135.4h0.1M468.6 48.5h0.1M419.5 130.5h0.1M469.6 115.2h0.1M464 100.8h0.1M395.5 147.3h0.1M388.5 110.9h0.1M474.5 68.6h0.1M473.8 101.5h0.1M491.9 94.4h0.1M404.1 169.7h0.1M399.5 109.8h0.1M509.4 108.2h0.1M473 186.8h0.1M409.8 80.8h0.1M395.5 114.2h0.1M519.9 109.4h0.1M490.7 171.8h0.1M419 74.8h0.1M494.6 123.7h0.1M464.9 155h0.1M511 121.2h0.1M491 85.9h0.1M432.7 73.6h0.1M477.4 90.4h0.1M459.1 128.3h0.1M484.5 197.2h0.1M475.9 173.3h0.1M496.5 107h0.1M506 133.8h0.1M432.3 146.7h0.1M506.1 101.5h0.1M483 136h0.1M407.7 107.8h0.1M476.7 104.2h0.1M456.3 108.7h0.1M488.7 128.4h0.1M504.7 83.8h0.1M423.8 86.6h0.1M464.5 168.6h0.1M432.2 86h0.1M384.7 143.2h0.1M387.4 146.8h0.1M389.4 137.5h0.1M468.9 159.1h0.1M437.3 193.7h0.1M430.2 70h0.1M476 64.8h0.1M421 67.1h0.1M395.7 104.3h0.1M532.2 157.3h0.1M455 58.7h0.1M479.2 95.6h0.1M492.6 171.5h0.1M413.6 175.8h0.1M389.9 129.5h0.1M432.2 54.4h0.1M488.3 152.6h0.1M447.2 149h0.1M417.2 120.6h0.1M407.6 85.9h0.1M448.1 103.8h0.1M397.9 133.5h0.1M488.6 73.9h0.1M512.1 180.1h0.1M385.6 144.9h0.1M495.4 123.1h0.1M427.8 113.2h0.1M404 79.2h0.1M398 109.8h0.1M481.5 178.7h0.1M485.7 86.1h0.1M481.7 104.3h0.1M435.9 131.3h0.1M389.1 91.7h0.1M532.9 89.7h0.1M455.1 156.8h0.1M438.9 137.2h0.1M426.7 142.1h0.1M417.4 149.6h0.1M429.8 116h0.1M481.4 98.7h0.1M445.5 96.5h0.1M473.6 56.8h0.1M517.1 119.1h0.1M495.8 111.3h0.1M481.1 167.6h0.1M396.3 134.9h0.1M434.1 180.7h0.1M481.2 119.1h0.1M470.9 117.4h0.1M433.5 68.5h0.1M528 104.1h0.1M499.5 151.6h0.1M508.6 101.4h0.1M508.6 110.8h0.1M453.8 62.7h0.1M387.5 92.7h0.1M450 92h0.1M429.5 53.1h0.1M485.2 49.3h0.1M503.1 134.1h0.1M470.4 152.9h0.1M400.5 167.3h0.1M411.9 145h0.1M459.3 100.7h0.1M472.7 72.2h0.1M456.3 165.4h0.1M512.8 111.6h0.1M456.2 55.2h0.1M504.6 71.8h0.1M515.3 137h0.1M397 121.9h0.1M498.8 184.2h0.1M444.6 175h0.1M527.8 155.9h0.1M388.6 151.2h0.1M419.9 127.8h0.1M428.4 175.2h0.1M400.5 138.3h0.1M502.6 146.8h0.1M502.5 178.8h0.1M439.4 168.1h0.1M404.3 78h0.1M507.6 184.9h0.1M492.5 100.8h0.1M447.3 147.1h0.1M405.4 98.2h0.1M445.3 120.1h0.1M400.5 82.1h0.1M467.2 187.8h0.1M455.7 92.5h0.1M521 121.7h0.1M496.9 96h0.1M413.2 149.9h0.1M421.2 161.8h0.1M478.3 176.5h0.1M467.4 177h0.1M491.2 183.6h0.1M387.3 99.3h0.1M388.7 136.4h0.1M517.7 118.5h0.1M446.4 84.7h0.1M524.1 151.9h0.1M506.3 154.9h0.1M464.9 144h0.1M495.7 88.2h0.1M506.5 61h0.1M512.1 173.6h0.1M449.8 88.2h0.1M399.6 123.1h0.1M467.9 162.5h0.1M511.4 123.9h0.1M449.5 55.3h0.1M468.5 194.9h0.1M455.8 147.3h0.1M442.5 193h0.1M461.3 185.4h0.1M515.5 88.4h0.1M404.5 71.4h0.1M489.1 113.6h0.1M497.6 124.2h0.1M472 76.6h0.1M444.5 196.8h0.1M503.8 136.3h0.1M424.1 130.7h0.1M460.5 153.4h0.1M474.8 48.9h0.1M491.2 147.8h0.1M497.8 115.8h0.1M483.5 98.3h0.1M443.6 163.6h0.1M436.8 145.4h0.1M505.7 185.7h0.1M404 162h0.1M441.1 124.2h0.1M530.1 161.5h0.1M497.9 179.8h0.1M491.8 145.5h0.1M432.7 179.5h0.1M472.1 44.7h0.1M436.6 118.8h0.1M437.8 54h0.1M501.4 162.1h0.1M393.6 133.4h0.1M473.8 101.1h0.1M450.4 142.6h0.1M423.9 149.1h0.1M467 183.1h0.1M445.1 116.1h0.1M437.9 163.1h0.1M411.2 71.3h0.1M495.8 52.3h0.1M463.7 177.5h0.1M476 186.5h0.1M490.4 122.9h0.1M468.7 56.4h0.1M482.6 116.2h0.1M488.5 175.7h0.1M480.6 195.7h0.1M499.6 147.6h0.1M466.8 200.6h0.1M477.3 92.2h0.1M478.7 170.6h0.1M446.1 121.3h0.1M488.4 141.9h0.1M526.4 143h0.1M445 188h0.1M425 156.7h0.1M447.1 124.1h0.1M479 110.7h0.1M443.1 127.8h0.1M437.6 73.3h0.1M416.1 164h0.1M445.2 130.5h0.1M493.9 70.8h0.1M492 124.4h0.1M488.9 92.2h0.1M406.4 110.3h0.1M511.5 65h0.1M483.8 136.8h0.1M470.5 131.9h0.1M494.3 85.3h0.1M476.3 86.1h0.1M447.3 147.8h0.1M440.7 184.2h0.1M430.8 154h0.1M407.6 89.6h0.1M535 134.2h0.1M442.1 181.4h0.1M457.7 165.3h0.1M433.9 148.4h0.1M507 150.6h0.1M467.3 95.5h0.1M388 114.7h0.1M440.6 182.5h0.1M406.1 125.9h0.1M445.7 72.8h0.1M508.2 127.3h0.1M479.3 125.6h0.1M508.3 105.4h0.1M427.4 192.2h0.1M470.8 127.7h0.1M415.8 108.1h0.1M461.4 153.8h0.1M423.6 152.7h0.1M442.7 139.3h0.1M449.3 110.7h0.1M418.8 160.5h0.1M491.6 125.4h0.1M424.6 176.3h0.1M520.6 159.2h0.1M487.1 190.1h0.1M537.3 121.4h0.1M537.5 103.4h0.1M452.3 199.4h0.1M405.8 156.3h0.1M486.3 177.2h0.1M444 143.2h0.1M528.5 93.1h0.1M469.8 69.9h0.1M519 99.2h0.1M429 182.9h0.1M525.7 82.9h0.1M442.8 49.1h0.1M482.9 92h0.1M477.5 142.1h0.1M474.8 62.9h0.1M426.8 155h0.1M506.2 118.5h0.1M519.9 82.7h0.1M495.4 63.2h0.1M497.7 167.7h0.1M459.8 165.5h0.1M471.8 180.8h0.1M499.7 100.3h0.1M430.4 114.3h0.1M447.6 167.9h0.1M411.1 169.9h0.1M442.1 124.6h0.1M506.1 77h0.1M480.5 137.2h0.1M508.4 185.9h0.1M427.2 193.8h0.1M510.8 105.8h0.1M472.6 87.6h0.1M442.7 111.2h0.1M397.7 133.9h0.1M454.2 148h0.1M491.2 55.8h0.1M433.5 128.2h0.1M522.2 101.1h0.1M439.1 78.1h0.1M459 178.7h0.1M504.8 143.1h0.1M422.3 124.8h0.1M436.5 132.1h0.1M504.3 188.1h0.1M436.7 86.5h0.1M488.9 54.9h0.1M482.4 90.9h0.1M509.5 125.5h0.1M395.9 98.6h0.1M424.3 104.2h0.1M409.1 144.5h0.1M443.9 127.8h0.1M488.6 135.4h0.1M521.6 146.6h0.1M499.6 62h0.1M472.4 126.5h0.1M414 75.3h0.1M428.3 174.3h0.1M468.6 145.9h0.1M446.6 178.6h0.1" stroke="#7fd86a" stroke-width="1.0" stroke-linecap="round" fill="none" opacity="0.5"/><path d="M500.3 159.6h0.1M464.9 199.6h0.1M506.4 63.4h0.1M449.6 61.5h0.1M463.5 187.6h0.1M448.2 87.7h0.1M505.4 118.1h0.1M413.2 173.6h0.1M422.6 166.1h0.1M478.3 190.4h0.1M397.7 98.4h0.1M412.6 94.9h0.1M486.8 184.5h0.1M381.9 121.9h0.1M521.4 127.3h0.1M473.1 165.3h0.1M404.3 117.1h0.1M511.8 176.1h0.1M409 177.9h0.1M492.5 157.5h0.1M482 172.2h0.1M515.5 65.5h0.1M476.1 64.5h0.1M475.3 106.5h0.1M393.3 130.1h0.1M478.4 174.4h0.1M443.6 117.7h0.1M395.3 137.7h0.1M432 106.3h0.1M509.3 119.6h0.1M494.4 137.4h0.1M506 83.8h0.1M486 68.3h0.1M423.7 67.7h0.1M497.4 121.8h0.1M438.5 117.7h0.1M447.6 131.2h0.1M398 163.5h0.1M502.8 69.7h0.1M519.6 113.4h0.1M495.6 77.3h0.1M503.3 156.1h0.1M450.6 77.8h0.1M484.5 52.3h0.1M514.1 143.4h0.1M441 54.7h0.1M492.2 105.6h0.1M434.5 160.4h0.1M477 92h0.1M531.7 92.9h0.1M474.1 178.8h0.1M516 173.6h0.1M398 125.3h0.1M443.2 154.9h0.1M420.4 98.3h0.1M402.7 69.9h0.1M423.2 142.4h0.1M414.6 127.5h0.1M404.4 73.4h0.1M462.1 83.6h0.1M499.9 62.3h0.1M488.5 75.3h0.1M440.2 56.6h0.1M462.1 99h0.1M511.3 146.8h0.1M507.7 70.2h0.1M395.5 103.5h0.1M493 77.3h0.1M486.1 110.8h0.1M506.2 144.6h0.1M531.1 150.9h0.1M431.7 195.5h0.1M472.8 121.3h0.1M474.4 106.6h0.1M490.1 96.1h0.1M406.2 177.5h0.1M430.1 130.9h0.1M394.2 152.1h0.1M478.7 167.5h0.1M451.9 162.2h0.1M449.9 149.2h0.1M404.5 90.4h0.1M425.6 123.6h0.1M451.3 173.1h0.1M400.7 87.8h0.1M491.1 65.2h0.1M482.2 127.6h0.1M477 94.8h0.1M463.6 103.2h0.1M504.1 185.8h0.1M464.6 57.9h0.1M420.7 161.9h0.1M467.4 138.4h0.1M467.4 150.9h0.1M382.8 116.7h0.1M415.4 109.5h0.1M416.5 118h0.1M527.5 113.7h0.1M525.6 137.4h0.1M414.4 106.5h0.1" stroke="#3fc428" stroke-width="1.3" stroke-linecap="round" fill="none" opacity="0.7"/><path d="M442.4 50h0.1M535.3 143.4h0.1M470.3 58.2h0.1M466.9 45.5h0.1M522.5 143.6h0.1M433.1 114.8h0.1M510.3 60h0.1M411.8 120.4h0.1M479.9 89.4h0.1M487.4 116.4h0.1M412.5 102.6h0.1M484 167.5h0.1M479.5 50.1h0.1M497.8 117.7h0.1M482.9 114.4h0.1M512.3 171.1h0.1M414.9 94.1h0.1M513 136.2h0.1M418.8 157.1h0.1M506.4 147.8h0.1M412.8 97.4h0.1M507.8 135.1h0.1M400.4 121.9h0.1M424.8 108.9h0.1M441.5 122.8h0.1M483.8 142.4h0.1M451.6 120.1h0.1M398.9 127.7h0.1M394.9 83.5h0.1M447.8 172.5h0.1M494.3 68.7h0.1M477.8 198.8h0.1M464.9 183.7h0.1M433.4 116.7h0.1M520.7 136h0.1M502 148.7h0.1M466.8 45.7h0.1M464.4 109.6h0.1M417.9 174.5h0.1M500.7 154.9h0.1M474.5 153.4h0.1M444.5 53.9h0.1M402.4 144.2h0.1M507.3 152.7h0.1M418.1 166.7h0.1M393.2 110.4h0.1M439.7 64.3h0.1M426.1 163.3h0.1M470.3 150.9h0.1M425.8 129h0.1M400.8 71.7h0.1M464 173.1h0.1M487.8 72.6h0.1M511.3 126.3h0.1M498.7 85.3h0.1M389 135.7h0.1M460.8 52.2h0.1M471.9 167.7h0.1M471 80.4h0.1M500 188.2h0.1" stroke="#7a8a88" stroke-width="1.2" stroke-linecap="round" fill="none" opacity="0.6"/></g></g></g></svg>
<div class="t" style="left:379px;top:209px;font-size:5.2px">Acquiring sample...</div>
<div style="left:379px;top:219px;width:164.5px;height:7px;background:#45464c;border-radius:1px"></div>
<div style="left:379px;top:219px;width:158px;height:7px;background:#008000;border-radius:1px 0 0 1px"></div>
<div class="t" style="left:379px;top:230px;font-size:5.2px">Time remaining: 0:03 min</div>
<div class="btn" style="top:240px"></div>
<div class="btn" style="top:257.3px"></div>
<div style="left:452.6px;top:244.4px;width:1.1px;height:5.2px;background:#f4f4f4"></div><div style="left:454.8px;top:244.4px;width:1.1px;height:5.2px;background:#f4f4f4"></div>
<div class="t" style="left:459.4px;top:243.5px">Pause</div>
<div style="left:453.2px;top:261.7px;width:4.8px;height:4.8px;background:#f4f4f4"></div>
<div class="t" style="left:460.7px;top:260.7px">Stop</div>
<!-- sample information -->
<div class="h" style="left:551px;top:29px">Sample information</div>
<div class="ul" style="left:551px;top:36px;width:195px"></div>
<div class="t" style="left:551px;top:40.5px">Sample ID:</div><div class="t" style="left:650.8px;top:40.5px">000003</div>
<div class="t" style="left:551px;top:50.5px">Standard:</div><div class="t" style="left:650.8px;top:50.5px">ISO 16232-10:2007 (A)</div>
<div class="t" style="left:551px;top:60.5px">Classification measurement:</div><div class="t" style="left:650.8px;top:60.5px">Feret Max. [µm]</div>
<div class="t" style="left:551px;top:70.5px">Count result:</div><div class="t" style="left:650.8px;top:70.5px">Contamination class</div>
<div class="h" style="left:551px;top:90.8px;transform:scaleX(.895)">Sample results</div>
<div class="ul" style="left:551px;top:97.8px;width:195px"></div>
<div class="t" style="left:551px;top:101.5px">Overall approval:</div><div class="t" style="left:650.8px;top:101.5px;color:#f5c400;font-weight:bold">NOK</div>
<div class="sep" style="top:111.2px"></div><div class="rng" style="top:114.5px">[5.00 - 15.00]</div><div class="let" style="top:121.3px">B</div><div class="bar" style="top:120px"><i style="width:51.1px"></i></div><div class="mk" style="top:119px"></div><div class="cnt" style="top:121.3px">11</div><div class="mxl" style="top:128.8px"></div><div class="mx" style="top:130.3px">Max: 20</div><div class="sep" style="top:135.1px"></div><div class="rng" style="top:138.4px">[15.00 - 25.00]</div><div class="let" style="top:145.2px">C</div><div class="bar" style="top:143.9px"><i style="width:70.8px"></i></div><div class="mk" style="top:142.9px"></div><div class="cnt" style="top:145.2px">8</div><div class="mxl" style="top:152.7px"></div><div class="mx" style="top:154.2px">Max: 10</div><div class="sep" style="top:159px"></div><div class="rng" style="top:162.2px">[25.00 - 50.00]</div><div class="let" style="top:169.1px">D</div><div class="bar" style="top:167.7px"><i style="width:76.3px"></i></div><div class="mk" style="top:166.7px"></div><div class="cnt" style="top:169.1px">7</div><div class="mxl" style="top:176.5px"></div><div class="mx" style="top:178.1px">Max: 8</div><div class="sep" style="top:182.9px"></div><div class="rng" style="top:186.1px">[50.00 - 100.00]</div><div class="let" style="top:193px">E</div><div class="bar" style="top:191.6px"><i style="width:82.8px"></i></div><div class="mk" style="top:190.6px"></div><div class="cnt" style="top:193px">5</div><div class="mxl" style="top:200.4px"></div><div class="mx" style="top:202px">Max: 5</div><div class="sep" style="top:206.7px"></div><div class="rng" style="top:210px">[100.00 - 150.00]</div><div class="let" style="top:216.8px">F</div><div class="bar" style="top:215.5px"><i style="width:66.8px"></i></div><div class="mk" style="top:214.5px"></div><div class="cnt" style="top:216.8px">1</div><div class="mxl" style="top:224.3px"></div><div class="mx" style="top:225.8px">Max: 2</div><div class="sep" style="top:230.6px"></div><div class="rng" style="top:233.9px">[150.00 - 200.00]</div><div class="let" style="top:240.7px">G</div><div class="bar" style="top:239.4px"><i style="width:82.8px"></i></div><div class="mk" style="top:238.4px"></div><div class="cnt" style="top:240.7px">0</div><div class="mxl" style="top:248.2px"></div><div class="mx" style="top:249.7px">Max: 0</div><div class="sep" style="top:254.5px"></div><div class="rng" style="top:257.7px">[200.00 - 400.00]</div><div class="let" style="top:264.6px">H</div><div class="bar" style="top:263.2px"><i style="width:82.8px"></i></div><div class="mk" style="top:262.2px"></div><div class="cnt" style="top:264.6px">0</div><div class="mxl" style="top:272px"></div><div class="mx" style="top:273.6px">Max: 0</div><div class="sep" style="top:278.3px"></div><div class="rng" style="top:281.6px">[400.00 - 600.00]</div><div class="let" style="top:288.4px">I</div><svg style="position:absolute;left:559px;top:286.1px" width="150" height="10" viewBox="0 0 150 10"><path d="M0.2 1 H141.5 L147.8 5 L141.5 9 H0.2 Z" fill="#f7c600"/></svg><div class="mk" style="top:286.1px;background:#3a7aa2"></div><div class="cnt" style="top:288.4px;left:708.5px">0</div><div class="mxl" style="top:295.9px"></div><div class="mx" style="top:297.4px">Max: 00</div><div class="sep" style="top:302.2px"></div><div class="rng" style="top:305.5px">[600.00 - 1000.00]</div><div class="let" style="top:312.3px">J</div><div class="bar" style="top:311px"><i style="width:0px"></i></div><div class="mk" style="top:310px"></div><div class="mxl" style="top:319.8px"></div><div class="mx" style="top:321.3px">Max: 00</div><div class="sep" style="top:326.1px"></div><div class="rng" style="top:329.3px">≥ 1000.00</div><div class="let" style="top:336.2px">K</div><div class="bar" style="top:334.8px"><i style="width:0px"></i></div><div class="mk" style="top:333.8px"></div><div class="mxl" style="top:343.6px"></div><div class="mx" style="top:345.2px">Max: 00</div>
</body></html>
